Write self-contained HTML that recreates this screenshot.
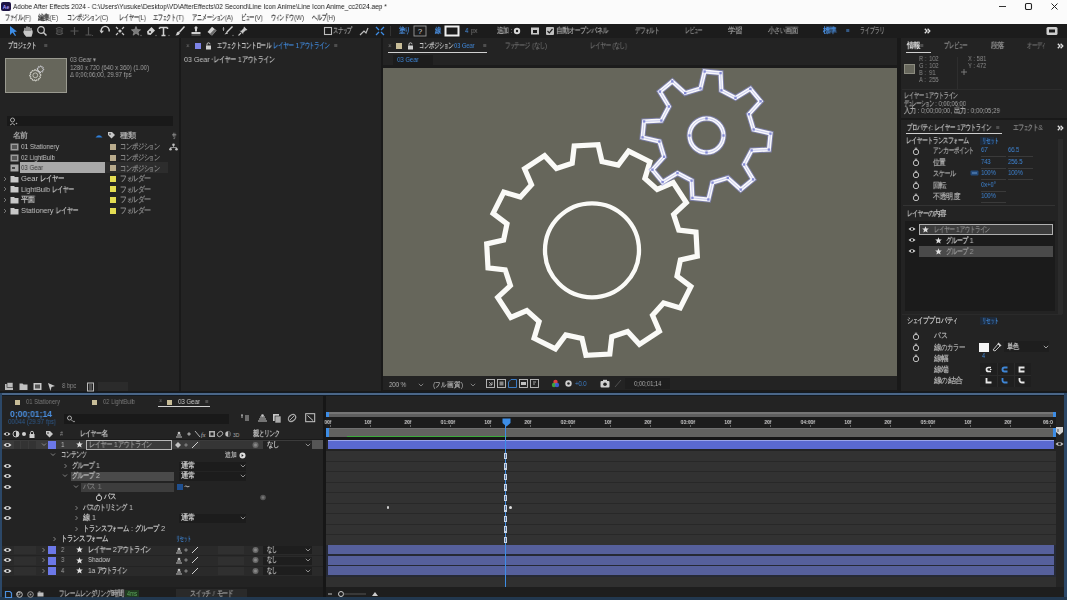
<!DOCTYPE html>
<html><head><meta charset="utf-8">
<style>
*{margin:0;padding:0;box-sizing:border-box}
html,body{width:1067px;height:600px;overflow:hidden;background:#171717;font-family:"Liberation Sans",sans-serif;font-size:7px;color:#b4b4b4}
.a{position:absolute}
.t{position:absolute;white-space:nowrap;line-height:1;transform:scaleX(0.82);transform-origin:0 0;will-change:transform}
svg{overflow:visible}
.c{display:inline-block;vertical-align:top;font-weight:bold}.c>span{display:inline-block;transform-origin:0 0}
</style></head><body>
<div class="a" style="left:0px;top:0px;width:1067px;height:24px;background:#fbfbfb;"></div>
<svg class="a" style="left:1px;top:2px;" width="10" height="9" viewBox="0 0 10 9"><rect x="0" y="0" width="10" height="9" rx="2" fill="#1c1244"/><text x="5" y="6.6" font-size="5" font-family="Liberation Sans" font-weight="bold" fill="#a89cff" text-anchor="middle">Ae</text></svg>
<div class="t" style="left:13px;top:2.97px;font-size:8.05px;color:#1a1a1a;;">Adobe After Effects 2024 - C:\Users\Yusuke\Desktop\VD\AfterEffects\02 Second\Line Icon Anime\Line Icon Anime_cc2024.aep *</div>
<div class="a" style="left:999px;top:6px;width:7px;height:1px;background:#333;"></div>
<svg class="a" style="left:1024px;top:2px;" width="9" height="9" viewBox="0 0 9 9"><rect x="1.5" y="1.5" width="6" height="6" rx="1.2" fill="none" stroke="#222" stroke-width="1.1"/></svg>
<svg class="a" style="left:1050px;top:2px;" width="9" height="9" viewBox="0 0 9 9"><path d="M1.5 1.5L7.5 7.5M7.5 1.5L1.5 7.5" stroke="#222" stroke-width="1"/></svg>
<div class="t" style="left:5px;top:14.22px;font-size:7.56px;color:#3a3a3a;;"><span class="c" style="width:5.90px"><span style="transform:scaleX(0.780)">フ</span></span><span class="c" style="width:4.54px"><span style="transform:scaleX(0.600)">ァ</span></span><span class="c" style="width:5.90px"><span style="transform:scaleX(0.780)">イ</span></span><span class="c" style="width:5.90px"><span style="transform:scaleX(0.780)">ル</span></span>(F)</div>
<div class="t" style="left:38px;top:14.22px;font-size:7.56px;color:#3a3a3a;;"><span class="c" style="width:7.18px"><span style="transform:scaleX(0.950)">編</span></span><span class="c" style="width:7.18px"><span style="transform:scaleX(0.950)">集</span></span>(E)</div>
<div class="t" style="left:67px;top:14.22px;font-size:7.56px;color:#3a3a3a;;"><span class="c" style="width:5.90px"><span style="transform:scaleX(0.780)">コ</span></span><span class="c" style="width:5.90px"><span style="transform:scaleX(0.780)">ン</span></span><span class="c" style="width:5.90px"><span style="transform:scaleX(0.780)">ポ</span></span><span class="c" style="width:5.90px"><span style="transform:scaleX(0.780)">ジ</span></span><span class="c" style="width:5.90px"><span style="transform:scaleX(0.780)">シ</span></span><span class="c" style="width:4.54px"><span style="transform:scaleX(0.600)">ョ</span></span><span class="c" style="width:5.90px"><span style="transform:scaleX(0.780)">ン</span></span>(C)</div>
<div class="t" style="left:119px;top:14.22px;font-size:7.56px;color:#3a3a3a;;"><span class="c" style="width:5.90px"><span style="transform:scaleX(0.780)">レ</span></span><span class="c" style="width:5.90px"><span style="transform:scaleX(0.780)">イ</span></span><span class="c" style="width:5.90px"><span style="transform:scaleX(0.780)">ヤ</span></span><span class="c" style="width:6.05px"><span style="transform:scaleX(0.800)">ー</span></span>(L)</div>
<div class="t" style="left:153px;top:14.22px;font-size:7.56px;color:#3a3a3a;;"><span class="c" style="width:5.90px"><span style="transform:scaleX(0.780)">エ</span></span><span class="c" style="width:5.90px"><span style="transform:scaleX(0.780)">フ</span></span><span class="c" style="width:4.54px"><span style="transform:scaleX(0.600)">ェ</span></span><span class="c" style="width:5.90px"><span style="transform:scaleX(0.780)">ク</span></span><span class="c" style="width:5.90px"><span style="transform:scaleX(0.780)">ト</span></span>(T)</div>
<div class="t" style="left:192px;top:14.22px;font-size:7.56px;color:#3a3a3a;;"><span class="c" style="width:5.90px"><span style="transform:scaleX(0.780)">ア</span></span><span class="c" style="width:5.90px"><span style="transform:scaleX(0.780)">ニ</span></span><span class="c" style="width:5.90px"><span style="transform:scaleX(0.780)">メ</span></span><span class="c" style="width:6.05px"><span style="transform:scaleX(0.800)">ー</span></span><span class="c" style="width:5.90px"><span style="transform:scaleX(0.780)">シ</span></span><span class="c" style="width:4.54px"><span style="transform:scaleX(0.600)">ョ</span></span><span class="c" style="width:5.90px"><span style="transform:scaleX(0.780)">ン</span></span>(A)</div>
<div class="t" style="left:241px;top:14.22px;font-size:7.56px;color:#3a3a3a;;"><span class="c" style="width:5.90px"><span style="transform:scaleX(0.780)">ビ</span></span><span class="c" style="width:4.54px"><span style="transform:scaleX(0.600)">ュ</span></span><span class="c" style="width:6.05px"><span style="transform:scaleX(0.800)">ー</span></span>(V)</div>
<div class="t" style="left:271px;top:14.22px;font-size:7.56px;color:#3a3a3a;;"><span class="c" style="width:5.90px"><span style="transform:scaleX(0.780)">ウ</span></span><span class="c" style="width:4.54px"><span style="transform:scaleX(0.600)">ィ</span></span><span class="c" style="width:5.90px"><span style="transform:scaleX(0.780)">ン</span></span><span class="c" style="width:5.90px"><span style="transform:scaleX(0.780)">ド</span></span><span class="c" style="width:5.90px"><span style="transform:scaleX(0.780)">ウ</span></span>(W)</div>
<div class="t" style="left:312px;top:14.22px;font-size:7.56px;color:#3a3a3a;;"><span class="c" style="width:5.90px"><span style="transform:scaleX(0.780)">ヘ</span></span><span class="c" style="width:5.90px"><span style="transform:scaleX(0.780)">ル</span></span><span class="c" style="width:5.90px"><span style="transform:scaleX(0.780)">プ</span></span>(H)</div>
<div class="a" style="left:0px;top:24px;width:1067px;height:14px;background:#1c1c1c;"></div>
<svg class="a" style="left:8px;top:25px;" width="10" height="12" viewBox="0 0 10 12"><path d="M2 1L2 10L4.5 7.5L7 11L8 10.5L6 7L9 6.5Z" fill="#3d8de6"/></svg>
<svg class="a" style="left:22px;top:25px;" width="12" height="12" viewBox="0 0 12 12"><path d="M3 6V3.5M5 6V2M7 6V2.3M9 6.5V3.5M3 6C2 6 1.5 7 2.5 8.5L4.5 11H9L10 8V6" stroke="#c8c8c8" stroke-width="1.3" fill="#c8c8c8" stroke-linecap="round"/></svg>
<svg class="a" style="left:36px;top:25px;" width="12" height="12" viewBox="0 0 12 12"><circle cx="5" cy="5" r="3.3" fill="none" stroke="#c8c8c8" stroke-width="1.2"/><path d="M7.5 7.5L10.5 10.5" stroke="#c8c8c8" stroke-width="1.5"/></svg>
<svg class="a" style="left:54px;top:25px;" width="11" height="12" viewBox="0 0 11 12"><path d="M2 4Q5 1 9 4M2 8Q5 11 9 8M3 5H8V7H3Z" stroke="#555" fill="none" stroke-width="1.1"/></svg>
<svg class="a" style="left:69px;top:25px;" width="11" height="12" viewBox="0 0 11 12"><path d="M5.5 2V10M1.5 6H9.5" stroke="#555" stroke-width="1.2"/></svg>
<svg class="a" style="left:83px;top:25px;" width="11" height="12" viewBox="0 0 11 12"><path d="M5.5 2V10M2.5 10H8.5" stroke="#555" stroke-width="1.2"/><circle cx="9.5" cy="10.5" r="0.6" fill="#555"/></svg>
<svg class="a" style="left:99px;top:25px;" width="12" height="12" viewBox="0 0 12 12"><path d="M2.5 7A4 4 0 1 1 10 6.5" fill="none" stroke="#c8c8c8" stroke-width="1.4"/><path d="M0.5 5.5L2.5 8.5L5 5.8Z" fill="#c8c8c8"/></svg>
<svg class="a" style="left:114px;top:25px;" width="12" height="12" viewBox="0 0 12 12"><path d="M2 2L4 4M10 2L8 4M2 10L4 8M10 10L8 8" stroke="#c8c8c8" stroke-width="1.2"/><circle cx="6" cy="6" r="1.6" fill="#c8c8c8"/></svg>
<svg class="a" style="left:130px;top:25px;" width="12" height="12" viewBox="0 0 12 12"><path d="M6 1.5L7.3 4.6L10.6 4.8L8 6.9L8.9 10.2L6 8.3L3.1 10.2L4 6.9L1.4 4.8L4.7 4.6Z" fill="#7a7a7a" stroke="#9a9a9a" stroke-width="0.6"/><circle cx="11" cy="10.5" r="0.7" fill="#777"/></svg>
<svg class="a" style="left:145px;top:25px;" width="12" height="12" viewBox="0 0 12 12"><path d="M2.5 9.5L2 6.5L6.5 2L10 5.5L5.5 10Z" fill="#d0d0d0"/><circle cx="5" cy="7" r="1" fill="#1c1c1c"/><circle cx="11" cy="10.5" r="0.7" fill="#777"/></svg>
<svg class="a" style="left:158px;top:25px;" width="12" height="12" viewBox="0 0 12 12"><path d="M1.5 2.5H9.5M5.5 2.5V10.5M3.5 10.5H7.5M1.5 2.5V4M9.5 2.5V4" stroke="#d0d0d0" stroke-width="1.5"/><circle cx="11" cy="10.5" r="0.7" fill="#777"/></svg>
<svg class="a" style="left:174px;top:25px;" width="12" height="12" viewBox="0 0 12 12"><path d="M10.5 1.5L5.5 7" stroke="#d0d0d0" stroke-width="1.5"/><path d="M5 6.5Q2.5 6.5 2.5 9L1.5 10.5Q5 10.5 6 8Z" fill="#d0d0d0"/></svg>
<svg class="a" style="left:190px;top:25px;" width="12" height="12" viewBox="0 0 12 12"><circle cx="6" cy="2.8" r="1.5" fill="#d0d0d0"/><path d="M5 3.5H7V6.5H5Z" fill="#d0d0d0"/><path d="M1.5 7H10.5V9H1.5Z" fill="#d0d0d0"/><path d="M1.5 10H10.5" stroke="#888" stroke-width="0.8"/></svg>
<svg class="a" style="left:206px;top:25px;" width="12" height="12" viewBox="0 0 12 12"><path d="M1.5 7L6 1.8L10.5 5.5L6 10.5Z" fill="#d0d0d0"/><path d="M3.7 9.3L8.3 4.2L10.5 5.5L6 10.5Z" fill="#6a6a6a"/></svg>
<svg class="a" style="left:222px;top:25px;" width="12" height="12" viewBox="0 0 12 12"><path d="M10.5 1.5L5 7" stroke="#d0d0d0" stroke-width="1.4"/><path d="M5 6.5L2.5 9.5L6 8.5Z" fill="#d0d0d0"/><path d="M1.5 2V6M0.5 4H2.5" stroke="#aaa" stroke-width="0.9"/><circle cx="11" cy="10.5" r="0.7" fill="#777"/></svg>
<svg class="a" style="left:237px;top:25px;" width="12" height="12" viewBox="0 0 12 12"><path d="M7 1.5L10.5 5L8.5 5.5L6 8L6.5 9.5L2.5 5.5L4 6L6.5 3.5Z" fill="#c8c8c8"/><path d="M4 8L1.5 10.5" stroke="#c8c8c8" stroke-width="1.1"/></svg>
<svg class="a" style="left:323px;top:26px;" width="10" height="10" viewBox="0 0 10 10"><rect x="1.5" y="1.5" width="7" height="7" fill="none" stroke="#bdbdbd" stroke-width="1.1"/></svg>
<div class="t" style="left:333px;top:27.22px;font-size:7.56px;color:#9a9a9a;;transform:scaleX(0.8557);"><span class="c" style="width:5.90px"><span style="transform:scaleX(0.780)">ス</span></span><span class="c" style="width:5.90px"><span style="transform:scaleX(0.780)">ナ</span></span><span class="c" style="width:4.54px"><span style="transform:scaleX(0.600)">ッ</span></span><span class="c" style="width:5.90px"><span style="transform:scaleX(0.780)">プ</span></span></div>
<svg class="a" style="left:358px;top:25px;" width="12" height="12" viewBox="0 0 12 12"><path d="M2 10L6 6L8 8L10 3" stroke="#bdbdbd" stroke-width="1.2" fill="none"/></svg>
<svg class="a" style="left:374px;top:25px;" width="12" height="12" viewBox="0 0 12 12"><path d="M2 2L5 5M10 2L7 5M2 10L5 7M10 10L7 7" stroke="#3d8de6" stroke-width="1.3"/></svg>
<div class="a" style="left:390px;top:26px;width:1px;height:10px;background:#333;"></div>
<div class="t" style="left:399px;top:27.22px;font-size:7.56px;color:#4a90e2;;"><span class="c" style="width:7.18px"><span style="transform:scaleX(0.950)">塗</span></span><span class="c" style="width:5.90px"><span style="transform:scaleX(0.780)">り</span></span></div>
<svg class="a" style="left:413px;top:25px;" width="14" height="12" viewBox="0 0 14 12"><rect x="1" y="1" width="12" height="10" fill="none" stroke="#9a9a9a" stroke-width="0.9"/><text x="7" y="9" font-size="8" text-anchor="middle" fill="#cfcfcf" font-family="Liberation Sans">?</text></svg>
<div class="t" style="left:435px;top:27.22px;font-size:7.56px;color:#4a90e2;;"><span class="c" style="width:7.18px"><span style="transform:scaleX(0.950)">線</span></span></div>
<svg class="a" style="left:444px;top:25px;" width="16" height="12" viewBox="0 0 16 12"><rect x="1.5" y="1.5" width="13" height="9" fill="none" stroke="#f0f0f0" stroke-width="2"/></svg>
<div class="t" style="left:465px;top:27.22px;font-size:7.56px;color:#4a90e2;;">4</div>
<div class="t" style="left:471px;top:27.34px;font-size:7.32px;color:#7a7a7a;;">px</div>
<div class="t" style="left:497px;top:27.22px;font-size:7.56px;color:#9a9a9a;;"><span class="c" style="width:7.18px"><span style="transform:scaleX(0.950)">追</span></span><span class="c" style="width:7.18px"><span style="transform:scaleX(0.950)">加</span></span> :</div>
<svg class="a" style="left:512px;top:26px;" width="10" height="10" viewBox="0 0 10 10"><circle cx="5" cy="5" r="3.2" fill="#d8d8d8"/><circle cx="5" cy="5" r="1.2" fill="#1c1c1c"/></svg>
<svg class="a" style="left:530px;top:26px;" width="10" height="10" viewBox="0 0 10 10"><rect x="1" y="1.5" width="8" height="7" fill="#c8c8c8"/><rect x="3" y="4" width="4" height="3" fill="#1c1c1c"/></svg>
<svg class="a" style="left:545px;top:26px;" width="10" height="10" viewBox="0 0 10 10"><rect x="1" y="1" width="8" height="8" rx="1" fill="#c0c0c0"/><path d="M2.5 5L4.3 6.8L7.5 3" stroke="#1c1c1c" stroke-width="1.2" fill="none"/></svg>
<div class="t" style="left:556px;top:27.22px;font-size:7.56px;color:#9a9a9a;;transform:scaleX(0.9330);"><span class="c" style="width:7.18px"><span style="transform:scaleX(0.950)">自</span></span><span class="c" style="width:7.18px"><span style="transform:scaleX(0.950)">動</span></span><span class="c" style="width:5.90px"><span style="transform:scaleX(0.780)">オ</span></span><span class="c" style="width:6.05px"><span style="transform:scaleX(0.800)">ー</span></span><span class="c" style="width:5.90px"><span style="transform:scaleX(0.780)">プ</span></span><span class="c" style="width:5.90px"><span style="transform:scaleX(0.780)">ン</span></span><span class="c" style="width:5.90px"><span style="transform:scaleX(0.780)">パ</span></span><span class="c" style="width:5.90px"><span style="transform:scaleX(0.780)">ネ</span></span><span class="c" style="width:5.90px"><span style="transform:scaleX(0.780)">ル</span></span></div>
<div class="t" style="left:634.5px;top:27.22px;font-size:7.56px;color:#8a8a8a;;transform:scaleX(0.8721);"><span class="c" style="width:5.90px"><span style="transform:scaleX(0.780)">デ</span></span><span class="c" style="width:5.90px"><span style="transform:scaleX(0.780)">フ</span></span><span class="c" style="width:4.54px"><span style="transform:scaleX(0.600)">ォ</span></span><span class="c" style="width:5.90px"><span style="transform:scaleX(0.780)">ル</span></span><span class="c" style="width:5.90px"><span style="transform:scaleX(0.780)">ト</span></span></div>
<div class="t" style="left:685px;top:27.22px;font-size:7.56px;color:#8a8a8a;;transform:scaleX(0.7827);"><span class="c" style="width:5.90px"><span style="transform:scaleX(0.780)">レ</span></span><span class="c" style="width:5.90px"><span style="transform:scaleX(0.780)">ビ</span></span><span class="c" style="width:4.54px"><span style="transform:scaleX(0.600)">ュ</span></span><span class="c" style="width:6.05px"><span style="transform:scaleX(0.800)">ー</span></span></div>
<div class="t" style="left:728px;top:27.22px;font-size:7.56px;color:#8a8a8a;;transform:scaleX(0.9760);"><span class="c" style="width:7.18px"><span style="transform:scaleX(0.950)">学</span></span><span class="c" style="width:7.18px"><span style="transform:scaleX(0.950)">習</span></span></div>
<div class="t" style="left:768px;top:27.22px;font-size:7.56px;color:#8a8a8a;;transform:scaleX(0.9010);"><span class="c" style="width:7.18px"><span style="transform:scaleX(0.950)">小</span></span><span class="c" style="width:5.90px"><span style="transform:scaleX(0.780)">さ</span></span><span class="c" style="width:5.90px"><span style="transform:scaleX(0.780)">い</span></span><span class="c" style="width:7.18px"><span style="transform:scaleX(0.950)">画</span></span><span class="c" style="width:7.18px"><span style="transform:scaleX(0.950)">面</span></span></div>
<div class="t" style="left:822.5px;top:27.22px;font-size:7.56px;color:#4a90e2;;transform:scaleX(0.9412);"><span class="c" style="width:7.18px"><span style="transform:scaleX(0.950)">標</span></span><span class="c" style="width:7.18px"><span style="transform:scaleX(0.950)">準</span></span></div>
<div class="t" style="left:846px;top:27.04px;font-size:7.93px;color:#4a90e2;;">≡</div>
<div class="t" style="left:860px;top:27.22px;font-size:7.56px;color:#8a8a8a;;transform:scaleX(0.8149);"><span class="c" style="width:5.90px"><span style="transform:scaleX(0.780)">ラ</span></span><span class="c" style="width:5.90px"><span style="transform:scaleX(0.780)">イ</span></span><span class="c" style="width:5.90px"><span style="transform:scaleX(0.780)">ブ</span></span><span class="c" style="width:5.90px"><span style="transform:scaleX(0.780)">ラ</span></span><span class="c" style="width:5.90px"><span style="transform:scaleX(0.780)">リ</span></span></div>
<svg class="a" style="left:924px;top:28px;" width="7" height="6" viewBox="0 0 7 6"><path d="M0.8 0.8L3 3L0.8 5.2M3.6 0.8L5.8 3L3.6 5.2" stroke="#e0e0e0" stroke-width="1.3" fill="none"/></svg>
<svg class="a" style="left:1046px;top:26px;" width="12" height="10" viewBox="0 0 12 10"><rect x="0.5" y="1" width="11" height="8" rx="1.5" fill="#cfcfcf"/><rect x="3" y="3.5" width="6" height="3" fill="#1c1c1c"/></svg>
<div class="a" style="left:0px;top:38px;width:1067px;height:355px;background:#191919;"></div>
<div class="a" style="left:0px;top:38px;width:178.5px;height:353px;background:#232323;"></div>
<div class="a" style="left:181px;top:38px;width:200px;height:353px;background:#232323;"></div>
<div class="a" style="left:383px;top:38px;width:514px;height:353px;background:#232323;"></div>
<div class="a" style="left:901px;top:38px;width:166px;height:80px;background:#232323;"></div>
<div class="a" style="left:901px;top:120px;width:166px;height:271px;background:#232323;"></div>
<div class="t" style="left:8px;top:42.16px;font-size:7.69px;color:#c8c8c8;;transform:scaleX(0.8109);"><span class="c" style="width:5.99px"><span style="transform:scaleX(0.780)">プ</span></span><span class="c" style="width:5.99px"><span style="transform:scaleX(0.780)">ロ</span></span><span class="c" style="width:5.99px"><span style="transform:scaleX(0.780)">ジ</span></span><span class="c" style="width:4.61px"><span style="transform:scaleX(0.600)">ェ</span></span><span class="c" style="width:5.99px"><span style="transform:scaleX(0.780)">ク</span></span><span class="c" style="width:5.99px"><span style="transform:scaleX(0.780)">ト</span></span></div>
<div class="t" style="left:44px;top:42.03px;font-size:7.93px;color:#777;;">≡</div>
<div class="a" style="left:4.5px;top:58px;width:62px;height:35.2px;background:#9a9a90;"></div>
<div class="a" style="left:5.5px;top:59px;width:60px;height:33.2px;background:rgb(102,102,91);"></div>
<svg class="a" style="left:0px;top:0px;" width="70" height="100" viewBox="0 0 70 100"><polygon points="34.25,70.72 34.36,69.78 35.62,69.71 35.83,70.63 36.69,70.81 37.24,70.05 38.37,70.62 38.09,71.52 38.75,72.10 39.61,71.72 40.30,72.78 39.61,73.42 39.88,74.25 40.82,74.36 40.89,75.62 39.97,75.83 39.79,76.69 40.55,77.24 39.98,78.37 39.08,78.09 38.50,78.75 38.88,79.61 37.82,80.30 37.18,79.61 36.35,79.88 36.24,80.82 34.98,80.89 34.77,79.97 33.91,79.79 33.36,80.55 32.23,79.98 32.51,79.08 31.85,78.50 30.99,78.88 30.30,77.82 30.99,77.18 30.72,76.35 29.78,76.24 29.71,74.98 30.63,74.77 30.81,73.91 30.05,73.36 30.62,72.23 31.52,72.51 32.10,71.85 31.72,70.99 32.78,70.30 33.42,70.99" fill="none" stroke="#e0e0d8" stroke-width="0.9"/><circle cx="35.3" cy="75.3" r="2.4" fill="none" stroke="#e0e0d8" stroke-width="0.7"/><polygon points="40.08,66.82 40.30,65.90 41.15,65.98 41.18,66.93 41.93,67.32 42.73,66.83 43.27,67.48 42.63,68.18 42.88,68.98 43.80,69.20 43.72,70.05 42.77,70.08 42.38,70.83 42.87,71.63 42.22,72.17 41.52,71.53 40.72,71.78 40.50,72.70 39.65,72.62 39.62,71.67 38.87,71.28 38.07,71.77 37.53,71.12 38.17,70.42 37.92,69.62 37.00,69.40 37.08,68.55 38.03,68.52 38.42,67.77 37.93,66.97 38.58,66.43 39.28,67.07" fill="none" stroke="#d8d8e0" stroke-width="0.8"/></svg>
<div class="t" style="left:70px;top:56.34px;font-size:7.32px;color:#a0a0a0;;">03 Gear ▾</div>
<div class="t" style="left:70px;top:63.84px;font-size:7.32px;color:#a0a0a0;;">1280 x 720  (640 x 360) (1.00)</div>
<div class="t" style="left:70px;top:71.34px;font-size:7.32px;color:#a0a0a0;;">Δ 0;00;06;00, 29.97 fps</div>
<div class="a" style="left:7px;top:116px;width:166px;height:10px;background:#191919;"></div>
<svg class="a" style="left:9px;top:117px;" width="10" height="8" viewBox="0 0 10 8"><circle cx="3.5" cy="3" r="2" fill="none" stroke="#aaa" stroke-width="1"/><path d="M1 8Q3.5 5 6 8" stroke="#aaa" stroke-width="1" fill="none"/><circle cx="7.5" cy="6.5" r="0.8" fill="#aaa"/></svg>
<div class="t" style="left:13px;top:132.16px;font-size:7.69px;color:#a5a5a5;;transform:scaleX(1.0278);"><span class="c" style="width:7.30px"><span style="transform:scaleX(0.950)">名</span></span><span class="c" style="width:7.30px"><span style="transform:scaleX(0.950)">前</span></span></div>
<svg class="a" style="left:95px;top:133px;" width="8" height="5" viewBox="0 0 8 5"><path d="M0.5 4.5Q4 0 7.5 4.5Z" fill="#2f7fd8"/></svg>
<svg class="a" style="left:107px;top:131px;" width="9" height="9" viewBox="0 0 9 9"><path d="M1 1H5L8 4L4.5 7.5L1 4Z" fill="#c8c8c8"/><circle cx="3" cy="3" r="0.8" fill="#232323"/></svg>
<div class="t" style="left:120px;top:132.16px;font-size:7.69px;color:#a5a5a5;;transform:scaleX(1.0964);"><span class="c" style="width:7.30px"><span style="transform:scaleX(0.950)">種</span></span><span class="c" style="width:7.30px"><span style="transform:scaleX(0.950)">類</span></span></div>
<div class="t" style="left:172px;top:132.34px;font-size:7.32px;color:#a5a5a5;;"><span class="c" style="width:5.71px"><span style="transform:scaleX(0.780)">サ</span></span></div>
<svg class="a" style="left:169px;top:143px;" width="9" height="8" viewBox="0 0 9 8"><circle cx="4.5" cy="1.8" r="1.3" fill="#c0c0c0"/><circle cx="1.5" cy="6.3" r="1.3" fill="#c0c0c0"/><circle cx="7.5" cy="6.3" r="1.3" fill="#c0c0c0"/><path d="M4.5 2V4.5H1.5V6M4.5 4.5H7.5V6" stroke="#c0c0c0" stroke-width="0.7" fill="none"/></svg>
<svg class="a" style="left:10px;top:143.2px;" width="9" height="8" viewBox="0 0 9 8"><rect x="0.5" y="0.5" width="8" height="7" fill="#9c9c9c"/><rect x="2" y="2" width="5" height="4" fill="#555"/></svg>
<svg class="a" style="left:110px;top:144.2px;" width="6" height="6" viewBox="0 0 6 6"><rect width="6" height="6" fill="#b9ab8c"/></svg>
<div class="t" style="left:20.5px;top:143.36px;font-size:7.69px;color:#c0c0c0;;transform:scaleX(0.8386);">01 Stationery</div>
<div class="t" style="left:120.3px;top:143.42px;font-size:7.56px;color:#858585;;transform:scaleX(1.0031);"><span class="c" style="width:5.90px"><span style="transform:scaleX(0.780)">コ</span></span><span class="c" style="width:5.90px"><span style="transform:scaleX(0.780)">ン</span></span><span class="c" style="width:5.90px"><span style="transform:scaleX(0.780)">ポ</span></span><span class="c" style="width:5.90px"><span style="transform:scaleX(0.780)">ジ</span></span><span class="c" style="width:5.90px"><span style="transform:scaleX(0.780)">シ</span></span><span class="c" style="width:4.54px"><span style="transform:scaleX(0.600)">ョ</span></span><span class="c" style="width:5.90px"><span style="transform:scaleX(0.780)">ン</span></span></div>
<svg class="a" style="left:10px;top:153.75px;" width="9" height="8" viewBox="0 0 9 8"><rect x="0.5" y="0.5" width="8" height="7" fill="#9c9c9c"/><rect x="2" y="2" width="5" height="4" fill="#555"/></svg>
<svg class="a" style="left:110px;top:154.75px;" width="6" height="6" viewBox="0 0 6 6"><rect width="6" height="6" fill="#b9ab8c"/></svg>
<div class="t" style="left:20.5px;top:153.91px;font-size:7.69px;color:#c0c0c0;;transform:scaleX(0.7953);">02 LightBulb</div>
<div class="t" style="left:120.3px;top:153.97px;font-size:7.56px;color:#858585;;transform:scaleX(1.0031);"><span class="c" style="width:5.90px"><span style="transform:scaleX(0.780)">コ</span></span><span class="c" style="width:5.90px"><span style="transform:scaleX(0.780)">ン</span></span><span class="c" style="width:5.90px"><span style="transform:scaleX(0.780)">ポ</span></span><span class="c" style="width:5.90px"><span style="transform:scaleX(0.780)">ジ</span></span><span class="c" style="width:5.90px"><span style="transform:scaleX(0.780)">シ</span></span><span class="c" style="width:4.54px"><span style="transform:scaleX(0.600)">ョ</span></span><span class="c" style="width:5.90px"><span style="transform:scaleX(0.780)">ン</span></span></div>
<div class="a" style="left:105px;top:162px;width:63px;height:11px;background:#2d2d2d;"></div>
<div class="a" style="left:20px;top:162px;width:85px;height:11px;background:#a9a9a9;"></div>
<svg class="a" style="left:10px;top:164.29999999999998px;" width="9" height="8" viewBox="0 0 9 8"><rect x="0.5" y="0.5" width="8" height="7" fill="#a8a8a8"/><rect x="2" y="3" width="3" height="2" fill="#444"/></svg>
<svg class="a" style="left:110px;top:165.29999999999998px;" width="6" height="6" viewBox="0 0 6 6"><rect width="6" height="6" fill="#b9ab8c"/></svg>
<div class="t" style="left:20.5px;top:164.46px;font-size:7.69px;color:#3a3a3a;;transform:scaleX(0.7919);">03 Gear</div>
<div class="t" style="left:120.3px;top:164.52px;font-size:7.56px;color:#858585;;transform:scaleX(1.0031);"><span class="c" style="width:5.90px"><span style="transform:scaleX(0.780)">コ</span></span><span class="c" style="width:5.90px"><span style="transform:scaleX(0.780)">ン</span></span><span class="c" style="width:5.90px"><span style="transform:scaleX(0.780)">ポ</span></span><span class="c" style="width:5.90px"><span style="transform:scaleX(0.780)">ジ</span></span><span class="c" style="width:5.90px"><span style="transform:scaleX(0.780)">シ</span></span><span class="c" style="width:4.54px"><span style="transform:scaleX(0.600)">ョ</span></span><span class="c" style="width:5.90px"><span style="transform:scaleX(0.780)">ン</span></span></div>
<svg class="a" style="left:3px;top:175.85px;" width="4" height="6" viewBox="0 0 4 6"><path d="M1 1L3 3L1 5" stroke="#888" stroke-width="0.8" fill="none"/></svg>
<svg class="a" style="left:10px;top:174.85px;" width="9" height="8" viewBox="0 0 9 8"><path d="M0.5 1H4L5 2H8.5V7.5H0.5Z" fill="#c8c8c8"/></svg>
<svg class="a" style="left:110px;top:175.85px;" width="6" height="6" viewBox="0 0 6 6"><rect width="6" height="6" fill="#e3dc52"/></svg>
<div class="t" style="left:20.5px;top:175.01px;font-size:7.69px;color:#c0c0c0;;transform:scaleX(0.9924);">Gear <span class="c" style="width:5.99px"><span style="transform:scaleX(0.780)">レ</span></span><span class="c" style="width:5.99px"><span style="transform:scaleX(0.780)">イ</span></span><span class="c" style="width:5.99px"><span style="transform:scaleX(0.780)">ヤ</span></span><span class="c" style="width:6.15px"><span style="transform:scaleX(0.800)">ー</span></span></div>
<div class="t" style="left:120.3px;top:175.07px;font-size:7.56px;color:#858585;;transform:scaleX(1.0973);"><span class="c" style="width:5.90px"><span style="transform:scaleX(0.780)">フ</span></span><span class="c" style="width:4.54px"><span style="transform:scaleX(0.600)">ォ</span></span><span class="c" style="width:5.90px"><span style="transform:scaleX(0.780)">ル</span></span><span class="c" style="width:5.90px"><span style="transform:scaleX(0.780)">ダ</span></span><span class="c" style="width:6.05px"><span style="transform:scaleX(0.800)">ー</span></span></div>
<svg class="a" style="left:3px;top:186.39999999999998px;" width="4" height="6" viewBox="0 0 4 6"><path d="M1 1L3 3L1 5" stroke="#888" stroke-width="0.8" fill="none"/></svg>
<svg class="a" style="left:10px;top:185.39999999999998px;" width="9" height="8" viewBox="0 0 9 8"><path d="M0.5 1H4L5 2H8.5V7.5H0.5Z" fill="#c8c8c8"/></svg>
<svg class="a" style="left:110px;top:186.39999999999998px;" width="6" height="6" viewBox="0 0 6 6"><rect width="6" height="6" fill="#e3dc52"/></svg>
<div class="t" style="left:20.5px;top:185.56px;font-size:7.69px;color:#c0c0c0;;transform:scaleX(0.9091);">LightBulb <span class="c" style="width:5.99px"><span style="transform:scaleX(0.780)">レ</span></span><span class="c" style="width:5.99px"><span style="transform:scaleX(0.780)">イ</span></span><span class="c" style="width:5.99px"><span style="transform:scaleX(0.780)">ヤ</span></span><span class="c" style="width:6.15px"><span style="transform:scaleX(0.800)">ー</span></span></div>
<div class="t" style="left:120.3px;top:185.62px;font-size:7.56px;color:#858585;;transform:scaleX(1.0973);"><span class="c" style="width:5.90px"><span style="transform:scaleX(0.780)">フ</span></span><span class="c" style="width:4.54px"><span style="transform:scaleX(0.600)">ォ</span></span><span class="c" style="width:5.90px"><span style="transform:scaleX(0.780)">ル</span></span><span class="c" style="width:5.90px"><span style="transform:scaleX(0.780)">ダ</span></span><span class="c" style="width:6.05px"><span style="transform:scaleX(0.800)">ー</span></span></div>
<svg class="a" style="left:3px;top:196.95px;" width="4" height="6" viewBox="0 0 4 6"><path d="M1 1L3 3L1 5" stroke="#888" stroke-width="0.8" fill="none"/></svg>
<svg class="a" style="left:10px;top:195.95px;" width="9" height="8" viewBox="0 0 9 8"><path d="M0.5 1H4L5 2H8.5V7.5H0.5Z" fill="#c8c8c8"/></svg>
<svg class="a" style="left:110px;top:196.95px;" width="6" height="6" viewBox="0 0 6 6"><rect width="6" height="6" fill="#e3dc52"/></svg>
<div class="t" style="left:20.5px;top:196.11px;font-size:7.69px;color:#c0c0c0;;transform:scaleX(0.9593);"><span class="c" style="width:7.30px"><span style="transform:scaleX(0.950)">平</span></span><span class="c" style="width:7.30px"><span style="transform:scaleX(0.950)">面</span></span></div>
<div class="t" style="left:120.3px;top:196.17px;font-size:7.56px;color:#858585;;transform:scaleX(1.0973);"><span class="c" style="width:5.90px"><span style="transform:scaleX(0.780)">フ</span></span><span class="c" style="width:4.54px"><span style="transform:scaleX(0.600)">ォ</span></span><span class="c" style="width:5.90px"><span style="transform:scaleX(0.780)">ル</span></span><span class="c" style="width:5.90px"><span style="transform:scaleX(0.780)">ダ</span></span><span class="c" style="width:6.05px"><span style="transform:scaleX(0.800)">ー</span></span></div>
<svg class="a" style="left:3px;top:207.5px;" width="4" height="6" viewBox="0 0 4 6"><path d="M1 1L3 3L1 5" stroke="#888" stroke-width="0.8" fill="none"/></svg>
<svg class="a" style="left:10px;top:206.5px;" width="9" height="8" viewBox="0 0 9 8"><path d="M0.5 1H4L5 2H8.5V7.5H0.5Z" fill="#c8c8c8"/></svg>
<svg class="a" style="left:110px;top:207.5px;" width="6" height="6" viewBox="0 0 6 6"><rect width="6" height="6" fill="#e3dc52"/></svg>
<div class="t" style="left:20.5px;top:206.66px;font-size:7.69px;color:#c0c0c0;;transform:scaleX(0.9368);">Stationery <span class="c" style="width:5.99px"><span style="transform:scaleX(0.780)">レ</span></span><span class="c" style="width:5.99px"><span style="transform:scaleX(0.780)">イ</span></span><span class="c" style="width:5.99px"><span style="transform:scaleX(0.780)">ヤ</span></span><span class="c" style="width:6.15px"><span style="transform:scaleX(0.800)">ー</span></span></div>
<div class="t" style="left:120.3px;top:206.72px;font-size:7.56px;color:#858585;;transform:scaleX(1.0973);"><span class="c" style="width:5.90px"><span style="transform:scaleX(0.780)">フ</span></span><span class="c" style="width:4.54px"><span style="transform:scaleX(0.600)">ォ</span></span><span class="c" style="width:5.90px"><span style="transform:scaleX(0.780)">ル</span></span><span class="c" style="width:5.90px"><span style="transform:scaleX(0.780)">ダ</span></span><span class="c" style="width:6.05px"><span style="transform:scaleX(0.800)">ー</span></span></div>
<svg class="a" style="left:4px;top:382px;" width="10" height="10" viewBox="0 0 10 10"><rect x="1" y="2" width="8" height="6" fill="#bbb"/><rect x="3" y="0.5" width="6" height="5" fill="#bbb" stroke="#232323" stroke-width="0.6"/></svg>
<svg class="a" style="left:19px;top:382px;" width="10" height="10" viewBox="0 0 10 10"><path d="M0.5 1.5H3.5L4.5 2.5H8.5V8H0.5Z" fill="#c0c0c0"/></svg>
<svg class="a" style="left:33px;top:382px;" width="10" height="10" viewBox="0 0 10 10"><rect x="0.5" y="1" width="8" height="7" fill="#c8c8c8"/><rect x="2" y="2.5" width="5" height="4" fill="#555"/></svg>
<svg class="a" style="left:47px;top:382px;" width="10" height="10" viewBox="0 0 10 10"><path d="M1 1L8 4L4.5 5L3.5 9Z" fill="#c8c8c8"/></svg>
<div class="t" style="left:62px;top:383.46px;font-size:7.08px;color:#8a8a8a;;">8 bpc</div>
<svg class="a" style="left:86px;top:382px;" width="9" height="10" viewBox="0 0 9 10"><rect x="1.5" y="1" width="6" height="8" fill="none" stroke="#bbb" stroke-width="1"/><path d="M3 3H6M3 5H6M3 7H6" stroke="#bbb" stroke-width="0.6"/></svg>
<div class="a" style="left:98px;top:382px;width:30px;height:9px;background:#2b2b2b;"></div>
<div class="a" style="left:178px;top:382px;width:1px;height:9px;background:#232323;"></div>
<div class="t" style="left:186px;top:42.34px;font-size:7.32px;color:#777;;">×</div>
<div class="a" style="left:195px;top:43px;width:6px;height:6px;background:#7d83e6;"></div>
<svg class="a" style="left:205px;top:42px;" width="7" height="8" viewBox="0 0 7 8"><rect x="1" y="3.5" width="5" height="4" fill="#cfcfcf"/><path d="M2 3.5V2.3A1.5 1.5 0 0 1 5 2.3" stroke="#cfcfcf" stroke-width="0.9" fill="none"/></svg>
<div class="t" style="left:216.5px;top:42.16px;font-size:7.69px;color:#c8c8c8;;transform:scaleX(0.8358);"><span class="c" style="width:5.99px"><span style="transform:scaleX(0.780)">エ</span></span><span class="c" style="width:5.99px"><span style="transform:scaleX(0.780)">フ</span></span><span class="c" style="width:4.61px"><span style="transform:scaleX(0.600)">ェ</span></span><span class="c" style="width:5.99px"><span style="transform:scaleX(0.780)">ク</span></span><span class="c" style="width:5.99px"><span style="transform:scaleX(0.780)">ト</span></span><span class="c" style="width:5.99px"><span style="transform:scaleX(0.780)">コ</span></span><span class="c" style="width:5.99px"><span style="transform:scaleX(0.780)">ン</span></span><span class="c" style="width:5.99px"><span style="transform:scaleX(0.780)">ト</span></span><span class="c" style="width:5.99px"><span style="transform:scaleX(0.780)">ロ</span></span><span class="c" style="width:6.15px"><span style="transform:scaleX(0.800)">ー</span></span><span class="c" style="width:5.99px"><span style="transform:scaleX(0.780)">ル</span></span></div>
<div class="t" style="left:273px;top:42.16px;font-size:7.69px;color:#3f86d6;;transform:scaleX(0.8582);"><span class="c" style="width:5.99px"><span style="transform:scaleX(0.780)">レ</span></span><span class="c" style="width:5.99px"><span style="transform:scaleX(0.780)">イ</span></span><span class="c" style="width:5.99px"><span style="transform:scaleX(0.780)">ヤ</span></span><span class="c" style="width:6.15px"><span style="transform:scaleX(0.800)">ー</span></span> 1<span class="c" style="width:5.99px"><span style="transform:scaleX(0.780)">ア</span></span><span class="c" style="width:5.99px"><span style="transform:scaleX(0.780)">ウ</span></span><span class="c" style="width:5.99px"><span style="transform:scaleX(0.780)">ト</span></span><span class="c" style="width:5.99px"><span style="transform:scaleX(0.780)">ラ</span></span><span class="c" style="width:5.99px"><span style="transform:scaleX(0.780)">イ</span></span><span class="c" style="width:5.99px"><span style="transform:scaleX(0.780)">ン</span></span></div>
<div class="t" style="left:334px;top:42.03px;font-size:7.93px;color:#777;;">≡</div>
<div class="t" style="left:184px;top:56.16px;font-size:7.69px;color:#c0c0c0;;transform:scaleX(0.9246);">03 Gear<span class="c" style="width:4.23px"><span style="transform:scaleX(0.550)">・</span></span><span class="c" style="width:5.99px"><span style="transform:scaleX(0.780)">レ</span></span><span class="c" style="width:5.99px"><span style="transform:scaleX(0.780)">イ</span></span><span class="c" style="width:5.99px"><span style="transform:scaleX(0.780)">ヤ</span></span><span class="c" style="width:6.15px"><span style="transform:scaleX(0.800)">ー</span></span> 1<span class="c" style="width:5.99px"><span style="transform:scaleX(0.780)">ア</span></span><span class="c" style="width:5.99px"><span style="transform:scaleX(0.780)">ウ</span></span><span class="c" style="width:5.99px"><span style="transform:scaleX(0.780)">ト</span></span><span class="c" style="width:5.99px"><span style="transform:scaleX(0.780)">ラ</span></span><span class="c" style="width:5.99px"><span style="transform:scaleX(0.780)">イ</span></span><span class="c" style="width:5.99px"><span style="transform:scaleX(0.780)">ン</span></span></div>
<div class="t" style="left:388px;top:42.34px;font-size:7.32px;color:#777;;">×</div>
<div class="a" style="left:396px;top:43px;width:6px;height:6px;background:#c8bd98;"></div>
<svg class="a" style="left:407px;top:42px;" width="7" height="8" viewBox="0 0 7 8"><rect x="1" y="3.5" width="5" height="4" fill="#cfcfcf"/><path d="M2 3.5V2.3A1.5 1.5 0 0 1 5 2.3" stroke="#cfcfcf" stroke-width="0.9" fill="none"/></svg>
<div class="t" style="left:418.8px;top:42.16px;font-size:7.69px;color:#c8c8c8;;transform:scaleX(0.8392);"><span class="c" style="width:5.99px"><span style="transform:scaleX(0.780)">コ</span></span><span class="c" style="width:5.99px"><span style="transform:scaleX(0.780)">ン</span></span><span class="c" style="width:5.99px"><span style="transform:scaleX(0.780)">ポ</span></span><span class="c" style="width:5.99px"><span style="transform:scaleX(0.780)">ジ</span></span><span class="c" style="width:5.99px"><span style="transform:scaleX(0.780)">シ</span></span><span class="c" style="width:4.61px"><span style="transform:scaleX(0.600)">ョ</span></span><span class="c" style="width:5.99px"><span style="transform:scaleX(0.780)">ン</span></span></div>
<div class="t" style="left:454px;top:42.16px;font-size:7.69px;color:#3f86d6;;transform:scaleX(0.7379);">03 Gear</div>
<div class="t" style="left:483px;top:42.03px;font-size:7.93px;color:#777;;">≡</div>
<div class="a" style="left:388px;top:52px;width:99px;height:1.4px;background:#d0d0d0;"></div>
<div class="t" style="left:505px;top:42.22px;font-size:7.56px;color:#6a6a6a;;transform:scaleX(0.8904);"><span class="c" style="width:5.90px"><span style="transform:scaleX(0.780)">フ</span></span><span class="c" style="width:4.54px"><span style="transform:scaleX(0.600)">ッ</span></span><span class="c" style="width:5.90px"><span style="transform:scaleX(0.780)">テ</span></span><span class="c" style="width:6.05px"><span style="transform:scaleX(0.800)">ー</span></span><span class="c" style="width:5.90px"><span style="transform:scaleX(0.780)">ジ</span></span> (<span class="c" style="width:5.90px"><span style="transform:scaleX(0.780)">な</span></span><span class="c" style="width:5.90px"><span style="transform:scaleX(0.780)">し</span></span>)</div>
<div class="t" style="left:589.5px;top:42.22px;font-size:7.56px;color:#6a6a6a;;transform:scaleX(0.8677);"><span class="c" style="width:5.90px"><span style="transform:scaleX(0.780)">レ</span></span><span class="c" style="width:5.90px"><span style="transform:scaleX(0.780)">イ</span></span><span class="c" style="width:5.90px"><span style="transform:scaleX(0.780)">ヤ</span></span><span class="c" style="width:6.05px"><span style="transform:scaleX(0.800)">ー</span></span> (<span class="c" style="width:5.90px"><span style="transform:scaleX(0.780)">な</span></span><span class="c" style="width:5.90px"><span style="transform:scaleX(0.780)">し</span></span>)</div>
<div class="a" style="left:383px;top:64.5px;width:514px;height:4px;background:#1b1b1b;"></div>
<div class="a" style="left:393px;top:55px;width:40px;height:10px;background:#1c1c1c;"></div>
<div class="t" style="left:397px;top:56.34px;font-size:7.32px;color:#3f86d6;;">03 Gear</div>
<div class="a" style="left:383px;top:68px;width:514px;height:308px;background:rgb(102,102,91);"></div>
<div class="t" style="left:389px;top:381.34px;font-size:7.32px;color:#b8b8b8;;">200 %</div>
<svg class="a" style="left:418px;top:382.5px;" width="6" height="4" viewBox="0 0 6 4"><path d="M0.8 0.8L3 3L5.2 0.8" stroke="#888" stroke-width="0.9" fill="none"/></svg>
<div class="t" style="left:433px;top:381.34px;font-size:7.32px;color:#a8a8a8;;transform:scaleX(0.9948);">(<span class="c" style="width:5.71px"><span style="transform:scaleX(0.780)">フ</span></span><span class="c" style="width:5.71px"><span style="transform:scaleX(0.780)">ル</span></span><span class="c" style="width:6.95px"><span style="transform:scaleX(0.950)">画</span></span><span class="c" style="width:6.95px"><span style="transform:scaleX(0.950)">質</span></span>)</div>
<svg class="a" style="left:470px;top:382.5px;" width="6" height="4" viewBox="0 0 6 4"><path d="M0.8 0.8L3 3L5.2 0.8" stroke="#888" stroke-width="0.9" fill="none"/></svg>
<svg class="a" style="left:486px;top:379px;" width="9" height="10" viewBox="0 0 9 10"><rect x="0.5" y="0.5" width="8" height="8" fill="none" stroke="#c0c0c0" stroke-width="0.9"/><path d="M3 3L6 6M6 3V6H3" stroke="#c0c0c0" stroke-width="0.8" fill="none"/></svg>
<svg class="a" style="left:497px;top:379px;" width="9" height="10" viewBox="0 0 9 10"><rect x="0.5" y="0.5" width="8" height="8" fill="none" stroke="#c0c0c0" stroke-width="0.9"/><rect x="2.5" y="2.5" width="4" height="4" fill="#888"/></svg>
<svg class="a" style="left:508px;top:379px;" width="9" height="10" viewBox="0 0 9 10"><path d="M0.5 8.5V3L3 0.5H8.5V8.5Z" fill="none" stroke="#3f86d6" stroke-width="0.9"/></svg>
<svg class="a" style="left:519px;top:379px;" width="9" height="10" viewBox="0 0 9 10"><rect x="0.5" y="0.5" width="8" height="8" fill="none" stroke="#c0c0c0" stroke-width="0.9"/><rect x="2" y="3" width="5" height="3" fill="#c0c0c0"/></svg>
<svg class="a" style="left:530px;top:379px;" width="9" height="10" viewBox="0 0 9 10"><rect x="0.5" y="0.5" width="8" height="8" fill="none" stroke="#c0c0c0" stroke-width="0.9"/><path d="M3 3H6M3 5H5" stroke="#c0c0c0" stroke-width="0.8"/></svg>
<svg class="a" style="left:551px;top:379px;" width="9" height="9" viewBox="0 0 9 9"><circle cx="4.5" cy="3" r="2.2" fill="#e04040"/><circle cx="3" cy="6" r="2.2" fill="#40b040" opacity="0.9"/><circle cx="6" cy="6" r="2.2" fill="#4060e0" opacity="0.9"/></svg>
<svg class="a" style="left:564px;top:379px;" width="9" height="9" viewBox="0 0 9 9"><circle cx="4.5" cy="4.5" r="3.2" fill="#d0d0d0"/><circle cx="4.5" cy="4.5" r="1.3" fill="#232323"/></svg>
<div class="t" style="left:575px;top:381.46px;font-size:7.08px;color:#3f86d6;;">+0.0</div>
<svg class="a" style="left:600px;top:379px;" width="10" height="9" viewBox="0 0 10 9"><rect x="0.5" y="2" width="9" height="6.5" rx="1" fill="#d0d0d0"/><circle cx="5" cy="5.2" r="1.8" fill="#232323"/><rect x="3" y="0.8" width="4" height="1.5" fill="#d0d0d0"/></svg>
<svg class="a" style="left:614px;top:379px;" width="8" height="9" viewBox="0 0 8 9"><path d="M1 8L7 1" stroke="#555" stroke-width="0.9"/></svg>
<div class="a" style="left:625px;top:378px;width:45px;height:11px;background:#1e1e1e;"></div>
<div class="t" style="left:634px;top:381.46px;font-size:7.08px;color:#a8a8a8;;">0;00;01;14</div>
<div class="a" style="left:382px;top:390px;width:516px;height:2px;background:#1a1a1a;"></div>
<div class="t" style="left:906.7px;top:42.16px;font-size:7.69px;color:#e0e0e0;;transform:scaleX(0.9113);"><span class="c" style="width:7.30px"><span style="transform:scaleX(0.950)">情</span></span><span class="c" style="width:7.30px"><span style="transform:scaleX(0.950)">報</span></span></div>
<div class="t" style="left:920px;top:42.03px;font-size:7.93px;color:#777;;">≡</div>
<div class="a" style="left:906px;top:52px;width:25px;height:1.4px;background:#d0d0d0;"></div>
<div class="t" style="left:944px;top:42.22px;font-size:7.56px;color:#8a8a8a;;transform:scaleX(0.8319);"><span class="c" style="width:5.90px"><span style="transform:scaleX(0.780)">プ</span></span><span class="c" style="width:5.90px"><span style="transform:scaleX(0.780)">レ</span></span><span class="c" style="width:5.90px"><span style="transform:scaleX(0.780)">ビ</span></span><span class="c" style="width:4.54px"><span style="transform:scaleX(0.600)">ュ</span></span><span class="c" style="width:6.05px"><span style="transform:scaleX(0.800)">ー</span></span></div>
<div class="t" style="left:991px;top:42.22px;font-size:7.56px;color:#8a8a8a;;transform:scaleX(0.9063);"><span class="c" style="width:7.18px"><span style="transform:scaleX(0.950)">段</span></span><span class="c" style="width:7.18px"><span style="transform:scaleX(0.950)">落</span></span></div>
<div class="t" style="left:1026.7px;top:42.22px;font-size:7.56px;color:#6a6a6a;;transform:scaleX(0.8184);"><span class="c" style="width:5.90px"><span style="transform:scaleX(0.780)">オ</span></span><span class="c" style="width:6.05px"><span style="transform:scaleX(0.800)">ー</span></span><span class="c" style="width:5.90px"><span style="transform:scaleX(0.780)">デ</span></span><span class="c" style="width:4.54px"><span style="transform:scaleX(0.600)">ィ</span></span></div>
<svg class="a" style="left:1057px;top:43px;" width="7" height="6" viewBox="0 0 7 6"><path d="M0.8 0.8L3 3L0.8 5.2M3.6 0.8L5.8 3L3.6 5.2" stroke="#e0e0e0" stroke-width="1.3" fill="none"/></svg>
<div class="a" style="left:904px;top:64px;width:11px;height:10px;background:#8c8c80;"></div>
<div class="a" style="left:905px;top:65px;width:9px;height:8px;background:rgb(102,102,91);"></div>
<div class="t" style="left:919px;top:56.46px;font-size:7.08px;color:#8a8a8a;;">R :</div>
<div class="t" style="left:929px;top:56.46px;font-size:7.08px;color:#8a8a8a;;">102</div>
<div class="t" style="left:919px;top:63.46px;font-size:7.08px;color:#8a8a8a;;">G :</div>
<div class="t" style="left:929px;top:63.46px;font-size:7.08px;color:#8a8a8a;;">102</div>
<div class="t" style="left:919px;top:70.46px;font-size:7.08px;color:#8a8a8a;;">B :</div>
<div class="t" style="left:929px;top:70.46px;font-size:7.08px;color:#8a8a8a;;">91</div>
<div class="t" style="left:919px;top:77.46px;font-size:7.08px;color:#8a8a8a;;">A :</div>
<div class="t" style="left:929px;top:77.46px;font-size:7.08px;color:#8a8a8a;;">255</div>
<div class="a" style="left:957px;top:57px;width:1px;height:32px;background:#2e2e2e;"></div>
<div class="t" style="left:968px;top:56.46px;font-size:7.08px;color:#8a8a8a;;">X :  581</div>
<div class="t" style="left:968px;top:63.46px;font-size:7.08px;color:#8a8a8a;;">Y :  472</div>
<svg class="a" style="left:960px;top:68px;" width="8" height="8" viewBox="0 0 8 8"><path d="M4 1V7M1 4H7" stroke="#8a8a8a" stroke-width="0.8"/></svg>
<div class="a" style="left:902px;top:89px;width:160px;height:1px;background:#2c2c2c;"></div>
<div class="t" style="left:904px;top:92.22px;font-size:7.56px;color:#a5a5a5;;transform:scaleX(0.8262);"><span class="c" style="width:5.90px"><span style="transform:scaleX(0.780)">レ</span></span><span class="c" style="width:5.90px"><span style="transform:scaleX(0.780)">イ</span></span><span class="c" style="width:5.90px"><span style="transform:scaleX(0.780)">ヤ</span></span><span class="c" style="width:6.05px"><span style="transform:scaleX(0.800)">ー</span></span> 1<span class="c" style="width:5.90px"><span style="transform:scaleX(0.780)">ア</span></span><span class="c" style="width:5.90px"><span style="transform:scaleX(0.780)">ウ</span></span><span class="c" style="width:5.90px"><span style="transform:scaleX(0.780)">ト</span></span><span class="c" style="width:5.90px"><span style="transform:scaleX(0.780)">ラ</span></span><span class="c" style="width:5.90px"><span style="transform:scaleX(0.780)">イ</span></span><span class="c" style="width:5.90px"><span style="transform:scaleX(0.780)">ン</span></span></div>
<div class="t" style="left:904px;top:99.72px;font-size:7.56px;color:#a5a5a5;;transform:scaleX(0.7688);"><span class="c" style="width:5.90px"><span style="transform:scaleX(0.780)">デ</span></span><span class="c" style="width:4.54px"><span style="transform:scaleX(0.600)">ュ</span></span><span class="c" style="width:5.90px"><span style="transform:scaleX(0.780)">レ</span></span><span class="c" style="width:6.05px"><span style="transform:scaleX(0.800)">ー</span></span><span class="c" style="width:5.90px"><span style="transform:scaleX(0.780)">シ</span></span><span class="c" style="width:4.54px"><span style="transform:scaleX(0.600)">ョ</span></span><span class="c" style="width:5.90px"><span style="transform:scaleX(0.780)">ン</span></span> : 0;00;06;00</div>
<div class="t" style="left:904px;top:107.22px;font-size:7.56px;color:#a5a5a5;;transform:scaleX(0.8218);"><span class="c" style="width:7.18px"><span style="transform:scaleX(0.950)">入</span></span><span class="c" style="width:7.18px"><span style="transform:scaleX(0.950)">力</span></span> : 0;00;00;00, <span class="c" style="width:7.18px"><span style="transform:scaleX(0.950)">出</span></span><span class="c" style="width:7.18px"><span style="transform:scaleX(0.950)">力</span></span> : 0;00;05;29</div>
<div class="t" style="left:906.7px;top:124.22px;font-size:7.56px;color:#c0c0c0;;transform:scaleX(0.8602);"><span class="c" style="width:5.90px"><span style="transform:scaleX(0.780)">プ</span></span><span class="c" style="width:5.90px"><span style="transform:scaleX(0.780)">ロ</span></span><span class="c" style="width:5.90px"><span style="transform:scaleX(0.780)">パ</span></span><span class="c" style="width:5.90px"><span style="transform:scaleX(0.780)">テ</span></span><span class="c" style="width:4.54px"><span style="transform:scaleX(0.600)">ィ</span></span>: <span class="c" style="width:5.90px"><span style="transform:scaleX(0.780)">レ</span></span><span class="c" style="width:5.90px"><span style="transform:scaleX(0.780)">イ</span></span><span class="c" style="width:5.90px"><span style="transform:scaleX(0.780)">ヤ</span></span><span class="c" style="width:6.05px"><span style="transform:scaleX(0.800)">ー</span></span> 1<span class="c" style="width:5.90px"><span style="transform:scaleX(0.780)">ア</span></span><span class="c" style="width:5.90px"><span style="transform:scaleX(0.780)">ウ</span></span><span class="c" style="width:5.90px"><span style="transform:scaleX(0.780)">ト</span></span><span class="c" style="width:5.90px"><span style="transform:scaleX(0.780)">ラ</span></span><span class="c" style="width:5.90px"><span style="transform:scaleX(0.780)">イ</span></span><span class="c" style="width:5.90px"><span style="transform:scaleX(0.780)">ン</span></span></div>
<div class="t" style="left:996px;top:124.03px;font-size:7.93px;color:#777;;">≡</div>
<div class="t" style="left:1013px;top:124.22px;font-size:7.56px;color:#8a8a8a;;transform:scaleX(0.9052);"><span class="c" style="width:5.90px"><span style="transform:scaleX(0.780)">エ</span></span><span class="c" style="width:5.90px"><span style="transform:scaleX(0.780)">フ</span></span><span class="c" style="width:4.54px"><span style="transform:scaleX(0.600)">ェ</span></span><span class="c" style="width:5.90px"><span style="transform:scaleX(0.780)">ク</span></span><span class="c" style="width:5.90px"><span style="transform:scaleX(0.780)">ト</span></span>&</div>
<svg class="a" style="left:1057px;top:125px;" width="7" height="6" viewBox="0 0 7 6"><path d="M0.8 0.8L3 3L0.8 5.2M3.6 0.8L5.8 3L3.6 5.2" stroke="#e0e0e0" stroke-width="1.3" fill="none"/></svg>
<div class="a" style="left:906px;top:133px;width:96px;height:1.4px;background:#d0d0d0;"></div>
<div class="a" style="left:1058px;top:139px;width:5px;height:175px;background:#2b2b2b;"></div>
<div class="t" style="left:906px;top:137.22px;font-size:7.56px;color:#c0c0c0;;transform:scaleX(0.8975);"><span class="c" style="width:5.90px"><span style="transform:scaleX(0.780)">レ</span></span><span class="c" style="width:5.90px"><span style="transform:scaleX(0.780)">イ</span></span><span class="c" style="width:5.90px"><span style="transform:scaleX(0.780)">ヤ</span></span><span class="c" style="width:6.05px"><span style="transform:scaleX(0.800)">ー</span></span><span class="c" style="width:5.90px"><span style="transform:scaleX(0.780)">ト</span></span><span class="c" style="width:5.90px"><span style="transform:scaleX(0.780)">ラ</span></span><span class="c" style="width:5.90px"><span style="transform:scaleX(0.780)">ン</span></span><span class="c" style="width:5.90px"><span style="transform:scaleX(0.780)">ス</span></span><span class="c" style="width:5.90px"><span style="transform:scaleX(0.780)">フ</span></span><span class="c" style="width:4.54px"><span style="transform:scaleX(0.600)">ォ</span></span><span class="c" style="width:6.05px"><span style="transform:scaleX(0.800)">ー</span></span><span class="c" style="width:5.90px"><span style="transform:scaleX(0.780)">ム</span></span></div>
<div class="a" style="left:980px;top:137px;width:14px;height:8px;background:#1e2a3a;"></div>
<div class="t" style="left:982px;top:137.58px;font-size:6.83px;color:#3f86d6;;"><span class="c" style="width:5.33px"><span style="transform:scaleX(0.780)">リ</span></span><span class="c" style="width:5.33px"><span style="transform:scaleX(0.780)">セ</span></span><span class="c" style="width:4.10px"><span style="transform:scaleX(0.600)">ッ</span></span><span class="c" style="width:5.33px"><span style="transform:scaleX(0.780)">ト</span></span></div>
<svg class="a" style="left:912px;top:146.5px;" width="8" height="9" viewBox="0 0 8 9"><circle cx="4" cy="5" r="2.7" fill="none" stroke="#c0c0c0" stroke-width="1"/><path d="M4 1.2V2.4M2.8 1.2H5.2" stroke="#c0c0c0" stroke-width="0.9"/></svg>
<div class="t" style="left:932.5px;top:147.22px;font-size:7.56px;color:#a8a8a8;;transform:scaleX(0.8672);"><span class="c" style="width:5.90px"><span style="transform:scaleX(0.780)">ア</span></span><span class="c" style="width:5.90px"><span style="transform:scaleX(0.780)">ン</span></span><span class="c" style="width:5.90px"><span style="transform:scaleX(0.780)">カ</span></span><span class="c" style="width:6.05px"><span style="transform:scaleX(0.800)">ー</span></span><span class="c" style="width:5.90px"><span style="transform:scaleX(0.780)">ポ</span></span><span class="c" style="width:5.90px"><span style="transform:scaleX(0.780)">イ</span></span><span class="c" style="width:5.90px"><span style="transform:scaleX(0.780)">ン</span></span><span class="c" style="width:5.90px"><span style="transform:scaleX(0.780)">ト</span></span></div>
<div class="t" style="left:981px;top:147.46px;font-size:7.08px;color:#3f86d6;;">67</div>
<div class="a" style="left:981px;top:156.0px;width:25px;height:0.7px;background:#3a3a3a;"></div>
<div class="t" style="left:1008px;top:147.46px;font-size:7.08px;color:#3f86d6;;">66.5</div>
<div class="a" style="left:1008px;top:156.0px;width:25px;height:0.7px;background:#3a3a3a;"></div>
<svg class="a" style="left:912px;top:158.0px;" width="8" height="9" viewBox="0 0 8 9"><circle cx="4" cy="5" r="2.7" fill="none" stroke="#c0c0c0" stroke-width="1"/><path d="M4 1.2V2.4M2.8 1.2H5.2" stroke="#c0c0c0" stroke-width="0.9"/></svg>
<div class="t" style="left:932.5px;top:158.72px;font-size:7.56px;color:#a8a8a8;;transform:scaleX(0.8715);"><span class="c" style="width:7.18px"><span style="transform:scaleX(0.950)">位</span></span><span class="c" style="width:7.18px"><span style="transform:scaleX(0.950)">置</span></span></div>
<div class="t" style="left:981px;top:158.96px;font-size:7.08px;color:#3f86d6;;">743</div>
<div class="a" style="left:981px;top:167.5px;width:25px;height:0.7px;background:#3a3a3a;"></div>
<div class="t" style="left:1008px;top:158.96px;font-size:7.08px;color:#3f86d6;;">256.5</div>
<div class="a" style="left:1008px;top:167.5px;width:25px;height:0.7px;background:#3a3a3a;"></div>
<svg class="a" style="left:912px;top:169.5px;" width="8" height="9" viewBox="0 0 8 9"><circle cx="4" cy="5" r="2.7" fill="none" stroke="#c0c0c0" stroke-width="1"/><path d="M4 1.2V2.4M2.8 1.2H5.2" stroke="#c0c0c0" stroke-width="0.9"/></svg>
<div class="t" style="left:932.5px;top:170.22px;font-size:7.56px;color:#a8a8a8;;transform:scaleX(0.9486);"><span class="c" style="width:5.90px"><span style="transform:scaleX(0.780)">ス</span></span><span class="c" style="width:5.90px"><span style="transform:scaleX(0.780)">ケ</span></span><span class="c" style="width:6.05px"><span style="transform:scaleX(0.800)">ー</span></span><span class="c" style="width:5.90px"><span style="transform:scaleX(0.780)">ル</span></span></div>
<div class="t" style="left:981px;top:170.46px;font-size:7.08px;color:#3f86d6;;">100%</div>
<div class="a" style="left:981px;top:179.0px;width:25px;height:0.7px;background:#3a3a3a;"></div>
<div class="t" style="left:1008px;top:170.46px;font-size:7.08px;color:#3f86d6;;">100%</div>
<div class="a" style="left:1008px;top:179.0px;width:25px;height:0.7px;background:#3a3a3a;"></div>
<svg class="a" style="left:912px;top:181.0px;" width="8" height="9" viewBox="0 0 8 9"><circle cx="4" cy="5" r="2.7" fill="none" stroke="#c0c0c0" stroke-width="1"/><path d="M4 1.2V2.4M2.8 1.2H5.2" stroke="#c0c0c0" stroke-width="0.9"/></svg>
<div class="t" style="left:932.5px;top:181.72px;font-size:7.56px;color:#a8a8a8;;transform:scaleX(0.9063);"><span class="c" style="width:7.18px"><span style="transform:scaleX(0.950)">回</span></span><span class="c" style="width:7.18px"><span style="transform:scaleX(0.950)">転</span></span></div>
<div class="t" style="left:981px;top:181.96px;font-size:7.08px;color:#3f86d6;;">0x+0°</div>
<div class="a" style="left:981px;top:190.5px;width:25px;height:0.7px;background:#3a3a3a;"></div>
<svg class="a" style="left:912px;top:192.5px;" width="8" height="9" viewBox="0 0 8 9"><circle cx="4" cy="5" r="2.7" fill="none" stroke="#c0c0c0" stroke-width="1"/><path d="M4 1.2V2.4M2.8 1.2H5.2" stroke="#c0c0c0" stroke-width="0.9"/></svg>
<div class="t" style="left:932.5px;top:193.22px;font-size:7.56px;color:#a8a8a8;;transform:scaleX(0.9307);"><span class="c" style="width:7.18px"><span style="transform:scaleX(0.950)">不</span></span><span class="c" style="width:7.18px"><span style="transform:scaleX(0.950)">透</span></span><span class="c" style="width:7.18px"><span style="transform:scaleX(0.950)">明</span></span><span class="c" style="width:7.18px"><span style="transform:scaleX(0.950)">度</span></span></div>
<div class="t" style="left:981px;top:193.46px;font-size:7.08px;color:#3f86d6;;">100%</div>
<div class="a" style="left:981px;top:202.0px;width:25px;height:0.7px;background:#3a3a3a;"></div>
<svg class="a" style="left:970px;top:170px;" width="9" height="6" viewBox="0 0 9 6"><rect x="0.5" y="0.5" width="8" height="5" rx="1" fill="#234a7a"/><path d="M2 3H7" stroke="#7aaae0" stroke-width="0.8"/></svg>
<div class="a" style="left:903px;top:205px;width:152px;height:1px;background:#333;"></div>
<div class="t" style="left:906.7px;top:210.22px;font-size:7.56px;color:#c0c0c0;;transform:scaleX(0.8873);"><span class="c" style="width:5.90px"><span style="transform:scaleX(0.780)">レ</span></span><span class="c" style="width:5.90px"><span style="transform:scaleX(0.780)">イ</span></span><span class="c" style="width:5.90px"><span style="transform:scaleX(0.780)">ヤ</span></span><span class="c" style="width:6.05px"><span style="transform:scaleX(0.800)">ー</span></span><span class="c" style="width:5.90px"><span style="transform:scaleX(0.780)">の</span></span><span class="c" style="width:7.18px"><span style="transform:scaleX(0.950)">内</span></span><span class="c" style="width:7.18px"><span style="transform:scaleX(0.950)">容</span></span></div>
<div class="a" style="left:905px;top:221px;width:150px;height:90px;background:#1b1b1b;"></div>
<div class="a" style="left:919px;top:224px;width:134px;height:11px;background:#b0b0b0;"></div>
<div class="a" style="left:920px;top:225px;width:132px;height:9px;background:#3c3c3c;"></div>
<div class="a" style="left:919px;top:246px;width:134px;height:11px;background:#4a4a4a;"></div>
<svg class="a" style="left:908px;top:226px;" width="8" height="6" viewBox="0 0 8 6"><path d="M0.5 3Q4 -0.5 7.5 3Q4 6.5 0.5 3Z" fill="#d8d8d8"/><circle cx="4" cy="3" r="1.2" fill="#1b1b1b"/></svg>
<svg class="a" style="left:908px;top:237px;" width="8" height="6" viewBox="0 0 8 6"><path d="M0.5 3Q4 -0.5 7.5 3Q4 6.5 0.5 3Z" fill="#d8d8d8"/><circle cx="4" cy="3" r="1.2" fill="#1b1b1b"/></svg>
<svg class="a" style="left:908px;top:248px;" width="8" height="6" viewBox="0 0 8 6"><path d="M0.5 3Q4 -0.5 7.5 3Q4 6.5 0.5 3Z" fill="#d8d8d8"/><circle cx="4" cy="3" r="1.2" fill="#1b1b1b"/></svg>
<svg class="a" style="left:922px;top:225.5px;" width="7" height="7" viewBox="0 0 7 7"><path d="M3.5 0.3L4.4 2.5L6.8 2.6L5 4.1L5.6 6.5L3.5 5.2L1.4 6.5L2 4.1L0.2 2.6L2.6 2.5Z" fill="#e0e0e0"/></svg>
<div class="t" style="left:934px;top:225.72px;font-size:7.56px;color:#8a8a8a;;transform:scaleX(0.8568);"><span class="c" style="width:5.90px"><span style="transform:scaleX(0.780)">レ</span></span><span class="c" style="width:5.90px"><span style="transform:scaleX(0.780)">イ</span></span><span class="c" style="width:5.90px"><span style="transform:scaleX(0.780)">ヤ</span></span><span class="c" style="width:6.05px"><span style="transform:scaleX(0.800)">ー</span></span> 1<span class="c" style="width:5.90px"><span style="transform:scaleX(0.780)">ア</span></span><span class="c" style="width:5.90px"><span style="transform:scaleX(0.780)">ウ</span></span><span class="c" style="width:5.90px"><span style="transform:scaleX(0.780)">ト</span></span><span class="c" style="width:5.90px"><span style="transform:scaleX(0.780)">ラ</span></span><span class="c" style="width:5.90px"><span style="transform:scaleX(0.780)">イ</span></span><span class="c" style="width:5.90px"><span style="transform:scaleX(0.780)">ン</span></span></div>
<svg class="a" style="left:935px;top:236.5px;" width="7" height="7" viewBox="0 0 7 7"><path d="M3.5 0.3L4.4 2.5L6.8 2.6L5 4.1L5.6 6.5L3.5 5.2L1.4 6.5L2 4.1L0.2 2.6L2.6 2.5Z" fill="#e0e0e0"/></svg>
<div class="t" style="left:945.8px;top:236.72px;font-size:7.56px;color:#c8c8c8;;transform:scaleX(0.9162);"><span class="c" style="width:5.90px"><span style="transform:scaleX(0.780)">グ</span></span><span class="c" style="width:5.90px"><span style="transform:scaleX(0.780)">ル</span></span><span class="c" style="width:6.05px"><span style="transform:scaleX(0.800)">ー</span></span><span class="c" style="width:5.90px"><span style="transform:scaleX(0.780)">プ</span></span> 1</div>
<svg class="a" style="left:935px;top:247.5px;" width="7" height="7" viewBox="0 0 7 7"><path d="M3.5 0.3L4.4 2.5L6.8 2.6L5 4.1L5.6 6.5L3.5 5.2L1.4 6.5L2 4.1L0.2 2.6L2.6 2.5Z" fill="#e0e0e0"/></svg>
<div class="t" style="left:945.8px;top:247.72px;font-size:7.56px;color:#9a9a9a;;transform:scaleX(0.9162);"><span class="c" style="width:5.90px"><span style="transform:scaleX(0.780)">グ</span></span><span class="c" style="width:5.90px"><span style="transform:scaleX(0.780)">ル</span></span><span class="c" style="width:6.05px"><span style="transform:scaleX(0.800)">ー</span></span><span class="c" style="width:5.90px"><span style="transform:scaleX(0.780)">プ</span></span> 2</div>
<div class="a" style="left:902px;top:314px;width:160px;height:1px;background:#2a2a2a;"></div>
<div class="t" style="left:907px;top:317.22px;font-size:7.56px;color:#c0c0c0;;transform:scaleX(0.9941);"><span class="c" style="width:5.90px"><span style="transform:scaleX(0.780)">シ</span></span><span class="c" style="width:4.54px"><span style="transform:scaleX(0.600)">ェ</span></span><span class="c" style="width:5.90px"><span style="transform:scaleX(0.780)">イ</span></span><span class="c" style="width:5.90px"><span style="transform:scaleX(0.780)">プ</span></span><span class="c" style="width:5.90px"><span style="transform:scaleX(0.780)">プ</span></span><span class="c" style="width:5.90px"><span style="transform:scaleX(0.780)">ロ</span></span><span class="c" style="width:5.90px"><span style="transform:scaleX(0.780)">パ</span></span><span class="c" style="width:5.90px"><span style="transform:scaleX(0.780)">テ</span></span><span class="c" style="width:4.54px"><span style="transform:scaleX(0.600)">ィ</span></span></div>
<div class="a" style="left:980px;top:317px;width:16px;height:8px;background:#1e2a3a;"></div>
<div class="t" style="left:982px;top:317.58px;font-size:6.83px;color:#3f86d6;;"><span class="c" style="width:5.33px"><span style="transform:scaleX(0.780)">リ</span></span><span class="c" style="width:5.33px"><span style="transform:scaleX(0.780)">セ</span></span><span class="c" style="width:4.10px"><span style="transform:scaleX(0.600)">ッ</span></span><span class="c" style="width:5.33px"><span style="transform:scaleX(0.780)">ト</span></span></div>
<svg class="a" style="left:912px;top:331.5px;" width="8" height="9" viewBox="0 0 8 9"><circle cx="4" cy="5" r="2.7" fill="none" stroke="#c0c0c0" stroke-width="1"/><path d="M4 1.2V2.4M2.8 1.2H5.2" stroke="#c0c0c0" stroke-width="0.9"/></svg>
<div class="t" style="left:934px;top:332.22px;font-size:7.56px;color:#a8a8a8;;transform:scaleX(1.1034);"><span class="c" style="width:5.90px"><span style="transform:scaleX(0.780)">パ</span></span><span class="c" style="width:5.90px"><span style="transform:scaleX(0.780)">ス</span></span></div>
<svg class="a" style="left:912px;top:342.8px;" width="8" height="9" viewBox="0 0 8 9"><circle cx="4" cy="5" r="2.7" fill="none" stroke="#c0c0c0" stroke-width="1"/><path d="M4 1.2V2.4M2.8 1.2H5.2" stroke="#c0c0c0" stroke-width="0.9"/></svg>
<div class="t" style="left:934px;top:343.52px;font-size:7.56px;color:#a8a8a8;;transform:scaleX(1.0035);"><span class="c" style="width:7.18px"><span style="transform:scaleX(0.950)">線</span></span><span class="c" style="width:5.90px"><span style="transform:scaleX(0.780)">の</span></span><span class="c" style="width:5.90px"><span style="transform:scaleX(0.780)">カ</span></span><span class="c" style="width:5.90px"><span style="transform:scaleX(0.780)">ラ</span></span><span class="c" style="width:6.05px"><span style="transform:scaleX(0.800)">ー</span></span></div>
<svg class="a" style="left:912px;top:354.1px;" width="8" height="9" viewBox="0 0 8 9"><circle cx="4" cy="5" r="2.7" fill="none" stroke="#c0c0c0" stroke-width="1"/><path d="M4 1.2V2.4M2.8 1.2H5.2" stroke="#c0c0c0" stroke-width="0.9"/></svg>
<div class="t" style="left:934px;top:354.82px;font-size:7.56px;color:#a8a8a8;;transform:scaleX(1.0248);"><span class="c" style="width:7.18px"><span style="transform:scaleX(0.950)">線</span></span><span class="c" style="width:7.18px"><span style="transform:scaleX(0.950)">幅</span></span></div>
<div class="t" style="left:934px;top:366.12px;font-size:7.56px;color:#a8a8a8;;transform:scaleX(1.0248);"><span class="c" style="width:7.18px"><span style="transform:scaleX(0.950)">線</span></span><span class="c" style="width:7.18px"><span style="transform:scaleX(0.950)">端</span></span></div>
<div class="t" style="left:934px;top:377.42px;font-size:7.56px;color:#a8a8a8;;transform:scaleX(1.0582);"><span class="c" style="width:7.18px"><span style="transform:scaleX(0.950)">線</span></span><span class="c" style="width:5.90px"><span style="transform:scaleX(0.780)">の</span></span><span class="c" style="width:7.18px"><span style="transform:scaleX(0.950)">結</span></span><span class="c" style="width:7.18px"><span style="transform:scaleX(0.950)">合</span></span></div>
<div class="a" style="left:979px;top:342.5px;width:10px;height:9.5px;background:#f4f4f4;"></div>
<svg class="a" style="left:991px;top:341px;" width="10" height="11" viewBox="0 0 10 11"><path d="M2 9L7 3L9 5L4 10Z" fill="none" stroke="#d0d0d0" stroke-width="0.9"/><path d="M7 2L10 5" stroke="#d0d0d0" stroke-width="1.4"/></svg>
<div class="a" style="left:1004px;top:341px;width:45px;height:11px;background:#1e1e1e;"></div>
<div class="t" style="left:1007px;top:342.72px;font-size:7.56px;color:#c0c0c0;;"><span class="c" style="width:7.18px"><span style="transform:scaleX(0.950)">単</span></span><span class="c" style="width:7.18px"><span style="transform:scaleX(0.950)">色</span></span></div>
<svg class="a" style="left:1043px;top:345px;" width="6" height="4" viewBox="0 0 6 4"><path d="M0.8 0.8L3 3L5.2 0.8" stroke="#aaa" stroke-width="0.9" fill="none"/></svg>
<div class="t" style="left:982px;top:353.46px;font-size:7.08px;color:#3f86d6;;">4</div>
<div class="a" style="left:980px;top:363px;width:51px;height:24px;background:#1f1f1f;"></div>
<div class="a" style="left:980px;top:375px;width:51px;height:0.8px;background:#2a2a2a;"></div>
<svg class="a" style="left:983.5px;top:364.5px;" width="9" height="9" viewBox="0 0 9 9"><path d="M7 2.5H4.5A2 2 0 0 0 4.5 6.5H7" stroke="#e8e8e8" stroke-width="1.7" fill="none"/><path d="M6 4.5H7.5" stroke="#e8e8e8" stroke-width="1.2"/></svg>
<svg class="a" style="left:983.5px;top:376px;" width="9" height="9" viewBox="0 0 9 9"><path d="M2.5 2V6.5H7.5" stroke="#e8e8e8" stroke-width="1.8" fill="none"/></svg>
<div class="a" style="left:997.0px;top:363px;width:0.8px;height:24px;background:#2a2a2a;"></div>
<div class="a" style="left:980px;top:375px;width:51px;height:0.8px;background:#2a2a2a;"></div>
<svg class="a" style="left:1000.0px;top:364.5px;" width="9" height="9" viewBox="0 0 9 9"><path d="M7.5 2.5H4.5A2 2 0 0 0 4.5 6.5H7.5" stroke="#3f86d6" stroke-width="1.9" fill="none"/></svg>
<svg class="a" style="left:1000.0px;top:376px;" width="9" height="9" viewBox="0 0 9 9"><path d="M2.5 2V4.5A2 2 0 0 0 4.5 6.5H7.5" stroke="#3f86d6" stroke-width="1.8" fill="none"/></svg>
<div class="a" style="left:1013.5px;top:363px;width:0.8px;height:24px;background:#2a2a2a;"></div>
<div class="a" style="left:980px;top:375px;width:51px;height:0.8px;background:#2a2a2a;"></div>
<svg class="a" style="left:1016.5px;top:364.5px;" width="9" height="9" viewBox="0 0 9 9"><path d="M7.5 2.5H2.5V6.5H7.5" stroke="#e8e8e8" stroke-width="1.8" fill="none"/></svg>
<svg class="a" style="left:1016.5px;top:376px;" width="9" height="9" viewBox="0 0 9 9"><path d="M2.5 2V4A2.5 2.5 0 0 0 5 6.5H7.5" stroke="#e8e8e8" stroke-width="1.8" fill="none"/></svg>
<div class="a" style="left:0px;top:392px;width:1067px;height:208px;background:#121a22;"></div>
<div class="a" style="left:0px;top:392.8px;width:1067px;height:2.5px;background:#4a6688;"></div>
<div class="a" style="left:0px;top:393px;width:2.2px;height:207px;background:#2c4868;"></div>
<div class="a" style="left:1064px;top:393px;width:2.5px;height:207px;background:#2c4868;"></div>
<div class="a" style="left:0px;top:597px;width:1067px;height:3px;background:#22384f;"></div>
<div class="a" style="left:2px;top:395.5px;width:1062px;height:201.5px;background:#232323;"></div>
<div class="a" style="left:15px;top:400px;width:5px;height:5px;background:#c8bd98;"></div>
<div class="t" style="left:26px;top:397.84px;font-size:7.32px;color:#7a7a7a;;transform:scaleX(0.7890);">01 Stationery</div>
<div class="a" style="left:92px;top:400px;width:5px;height:5px;background:#c8bd98;"></div>
<div class="t" style="left:103px;top:397.84px;font-size:7.32px;color:#7a7a7a;;transform:scaleX(0.7868);">02 LightBulb</div>
<div class="t" style="left:159px;top:398.14px;font-size:6.71px;color:#777;;">×</div>
<div class="a" style="left:167px;top:400px;width:5px;height:5px;background:#c8bd98;"></div>
<div class="t" style="left:178px;top:397.84px;font-size:7.32px;color:#c8c8c8;;transform:scaleX(0.8322);">03 Gear</div>
<div class="t" style="left:205px;top:397.84px;font-size:7.32px;color:#777;;">≡</div>
<div class="a" style="left:158px;top:405.5px;width:52px;height:1.2px;background:#d0d0d0;"></div>
<div class="t" style="left:10px;top:410.41px;font-size:8.78px;color:#4a8fe0;font-weight:bold;transform:scaleX(0.9792);">0;00;01;14</div>
<div class="t" style="left:8px;top:419.27px;font-size:6.47px;color:#2e5b8e;;transform:scaleX(0.9464);">00044 (29.97 fps)</div>
<div class="a" style="left:64px;top:413.5px;width:165px;height:10px;background:#191919;"></div>
<svg class="a" style="left:66px;top:414.5px;" width="10" height="8" viewBox="0 0 10 8"><circle cx="3.5" cy="3" r="2" fill="none" stroke="#aaa" stroke-width="1"/><path d="M5 4.5L7 6.5" stroke="#aaa" stroke-width="1"/><circle cx="8" cy="6.5" r="0.8" fill="#aaa"/></svg>
<svg class="a" style="left:240px;top:413px;" width="11" height="11" viewBox="0 0 11 11"><path d="M1 2H3M2 2V5M5 3H9M5 5H9M5 7H9" stroke="#c8c8c8" stroke-width="0.9"/></svg>
<svg class="a" style="left:257px;top:413px;" width="11" height="11" viewBox="0 0 11 11"><path d="M1 8H10M2 6H9M3 4H8" stroke="#c8c8c8" stroke-width="1.1"/><circle cx="5.5" cy="2.5" r="1.3" fill="#c8c8c8"/></svg>
<svg class="a" style="left:272px;top:413px;" width="11" height="11" viewBox="0 0 11 11"><rect x="1" y="1" width="6" height="7" fill="#c8c8c8"/><rect x="3" y="3" width="6" height="7" fill="#aaa" stroke="#232323" stroke-width="0.6"/></svg>
<svg class="a" style="left:287px;top:413px;" width="11" height="11" viewBox="0 0 11 11"><ellipse cx="5" cy="5" rx="4" ry="3" transform="rotate(-40 5 5)" fill="none" stroke="#aaa" stroke-width="1.2"/><path d="M3 7L7 3" stroke="#aaa" stroke-width="1"/></svg>
<svg class="a" style="left:305px;top:413px;" width="11" height="11" viewBox="0 0 11 11"><rect x="0.7" y="0.7" width="9" height="8" fill="none" stroke="#c8c8c8" stroke-width="1"/><path d="M2.5 2.5L8 7.5" stroke="#c8c8c8" stroke-width="1"/></svg>
<svg class="a" style="left:3px;top:431px;" width="8" height="6" viewBox="0 0 8 6"><path d="M0.5 3Q4 -0.5 7.5 3Q4 6.5 0.5 3Z" fill="#d8d8d8"/><circle cx="4" cy="3" r="1.2" fill="#232323"/></svg>
<svg class="a" style="left:12px;top:430px;" width="8" height="8" viewBox="0 0 8 8"><circle cx="4" cy="4" r="3" fill="none" stroke="#d0d0d0" stroke-width="0.9"/><path d="M4 1A3 3 0 0 1 4 7Z" fill="#d0d0d0"/></svg>
<svg class="a" style="left:20px;top:430px;" width="8" height="8" viewBox="0 0 8 8"><circle cx="4" cy="4" r="2" fill="#d0d0d0"/></svg>
<svg class="a" style="left:28px;top:429.5px;" width="8" height="9" viewBox="0 0 8 9"><rect x="1.5" y="4" width="5" height="4" fill="#d0d0d0"/><path d="M2.5 4V2.8A1.5 1.5 0 0 1 5.5 2.8V4" stroke="#d0d0d0" stroke-width="0.9" fill="none"/></svg>
<svg class="a" style="left:45px;top:429.5px;" width="9" height="9" viewBox="0 0 9 9"><path d="M1 1H5L8 4L4.5 7.5L1 4Z" fill="#c8c8c8"/><circle cx="3" cy="3" r="0.8" fill="#232323"/></svg>
<div class="t" style="left:60px;top:430.64px;font-size:6.71px;color:#8a8a8a;;">#</div>
<div class="t" style="left:80px;top:430.16px;font-size:7.69px;color:#c0c0c0;;transform:scaleX(0.8920);"><span class="c" style="width:5.99px"><span style="transform:scaleX(0.780)">レ</span></span><span class="c" style="width:5.99px"><span style="transform:scaleX(0.780)">イ</span></span><span class="c" style="width:5.99px"><span style="transform:scaleX(0.780)">ヤ</span></span><span class="c" style="width:6.15px"><span style="transform:scaleX(0.800)">ー</span></span><span class="c" style="width:7.30px"><span style="transform:scaleX(0.950)">名</span></span></div>
<svg class="a" style="left:175px;top:430px;" width="70" height="8" viewBox="0 0 70 8"><path d="M1 7H7M2 5H6" stroke="#c0c0c0" stroke-width="1"/><circle cx="4" cy="3" r="1.3" fill="#c0c0c0"/><path d="M12 4L14 2L16 4L14 6Z" fill="#999"/><path d="M20 1L25 7" stroke="#c0c0c0" stroke-width="0.9"/><text x="26" y="7" font-size="6" font-style="italic" fill="#c0c0c0" font-family="Liberation Serif">fx</text><rect x="34" y="1" width="6" height="6" fill="#b0b0b0"/><rect x="35.5" y="2.5" width="3" height="3" fill="#232323"/><ellipse cx="45" cy="4" rx="3" ry="2.2" transform="rotate(-40 45 4)" fill="none" stroke="#b0b0b0" stroke-width="0.9"/><circle cx="53" cy="4" r="2.7" fill="#c0c0c0"/><path d="M53 1.3A2.7 2.7 0 0 1 53 6.7Z" fill="#444"/><text x="58" y="6.5" font-size="5" fill="#aaa" font-family="Liberation Sans">3D</text></svg>
<div class="t" style="left:253px;top:430.16px;font-size:7.69px;color:#c0c0c0;;transform:scaleX(0.8644);"><span class="c" style="width:7.30px"><span style="transform:scaleX(0.950)">親</span></span><span class="c" style="width:5.99px"><span style="transform:scaleX(0.780)">と</span></span><span class="c" style="width:5.99px"><span style="transform:scaleX(0.780)">リ</span></span><span class="c" style="width:5.99px"><span style="transform:scaleX(0.780)">ン</span></span><span class="c" style="width:5.99px"><span style="transform:scaleX(0.780)">ク</span></span></div>
<div class="a" style="left:2px;top:439px;width:321px;height:1px;background:#1a1a1a;"></div>
<div class="a" style="left:2px;top:440.0px;width:321px;height:9px;background:#3b3b3b;"></div>
<div class="a" style="left:14px;top:440.5px;width:22px;height:8px;background:#333333;"></div>
<div class="a" style="left:20px;top:440.5px;width:0.7px;height:8px;background:#3b3b3b;"></div>
<div class="a" style="left:28px;top:440.5px;width:0.7px;height:8px;background:#3b3b3b;"></div>
<div class="a" style="left:200px;top:440.5px;width:53px;height:8px;background:#353535;"></div>
<div class="a" style="left:263px;top:440.5px;width:49px;height:8px;background:#232323;"></div>
<div class="a" style="left:312px;top:440.0px;width:11px;height:9px;background:#555;"></div>
<svg class="a" style="left:3px;top:441.5px;" width="9" height="6" viewBox="0 0 9 6"><path d="M0.5 3Q4.5 -0.8 8.5 3Q4.5 6.8 0.5 3Z" fill="#e0e0e0"/><circle cx="4.5" cy="3" r="1.3" fill="#232323"/></svg>
<svg class="a" style="left:41px;top:441.5px;" width="6" height="6" viewBox="0 0 6 6"><path d="M1 1.5L3 3.5L5 1.5" stroke="#9a9a9a" stroke-width="0.8" fill="none"/></svg>
<div class="a" style="left:48px;top:440.5px;width:8px;height:8px;background:#6c78e8;"></div>
<div class="t" style="left:61px;top:440.84px;font-size:7.32px;color:#c0c0c0;;">1</div>
<svg class="a" style="left:76px;top:441.0px;" width="7" height="7" viewBox="0 0 7 7"><path d="M3.5 0.3L4.4 2.5L6.8 2.6L5 4.1L5.6 6.5L3.5 5.2L1.4 6.5L2 4.1L0.2 2.6L2.6 2.5Z" fill="#e0e0e0"/></svg>
<div class="a" style="left:86px;top:439.5px;width:86px;height:10px;background:#b8b8b8;"></div>
<div class="a" style="left:87px;top:440.5px;width:84px;height:8px;background:#3a3a3a;"></div>
<div class="t" style="left:88.5px;top:440.72px;font-size:7.56px;color:#9a9a9a;;transform:scaleX(0.9639);"><span class="c" style="width:5.90px"><span style="transform:scaleX(0.780)">レ</span></span><span class="c" style="width:5.90px"><span style="transform:scaleX(0.780)">イ</span></span><span class="c" style="width:5.90px"><span style="transform:scaleX(0.780)">ヤ</span></span><span class="c" style="width:6.05px"><span style="transform:scaleX(0.800)">ー</span></span> 1<span class="c" style="width:5.90px"><span style="transform:scaleX(0.780)">ア</span></span><span class="c" style="width:5.90px"><span style="transform:scaleX(0.780)">ウ</span></span><span class="c" style="width:5.90px"><span style="transform:scaleX(0.780)">ト</span></span><span class="c" style="width:5.90px"><span style="transform:scaleX(0.780)">ラ</span></span><span class="c" style="width:5.90px"><span style="transform:scaleX(0.780)">イ</span></span><span class="c" style="width:5.90px"><span style="transform:scaleX(0.780)">ン</span></span></div>
<svg class="a" style="left:175px;top:440.5px;" width="24" height="8" viewBox="0 0 24 8"><path d="M3 1L6 4L3 7L0 4Z" fill="#c0c0c0"/><path d="M11 2L13 4L11 6L9 4Z" fill="#777"/><path d="M17 7L23 1" stroke="#d0d0d0" stroke-width="1"/></svg>
<svg class="a" style="left:251px;top:440.5px;" width="9" height="8" viewBox="0 0 9 8"><circle cx="4.5" cy="4" r="3" fill="#666"/><circle cx="4.5" cy="4" r="1.5" fill="#888"/></svg>
<div class="t" style="left:267px;top:440.72px;font-size:7.56px;color:#c8c8c8;;transform:scaleX(1.0186);"><span class="c" style="width:5.90px"><span style="transform:scaleX(0.780)">な</span></span><span class="c" style="width:5.90px"><span style="transform:scaleX(0.780)">し</span></span></div>
<svg class="a" style="left:305px;top:442.5px;" width="6" height="4" viewBox="0 0 6 4"><path d="M0.8 0.8L3 3L5.2 0.8" stroke="#999" stroke-width="0.9" fill="none"/></svg>
<div class="a" style="left:2px;top:450.5px;width:321px;height:105px;background:#232323;"></div>
<svg class="a" style="left:50px;top:452.0px;" width="6" height="6" viewBox="0 0 6 6"><path d="M1 1.5L3 3.5L5 1.5" stroke="#9a9a9a" stroke-width="0.8" fill="none"/></svg>
<div class="t" style="left:61px;top:451.22px;font-size:7.56px;color:#c0c0c0;;transform:scaleX(0.8488);"><span class="c" style="width:5.90px"><span style="transform:scaleX(0.780)">コ</span></span><span class="c" style="width:5.90px"><span style="transform:scaleX(0.780)">ン</span></span><span class="c" style="width:5.90px"><span style="transform:scaleX(0.780)">テ</span></span><span class="c" style="width:5.90px"><span style="transform:scaleX(0.780)">ン</span></span><span class="c" style="width:5.90px"><span style="transform:scaleX(0.780)">ツ</span></span></div>
<div class="t" style="left:224.8px;top:451.34px;font-size:7.32px;color:#b0b0b0;;transform:scaleX(0.8649);"><span class="c" style="width:6.95px"><span style="transform:scaleX(0.950)">追</span></span><span class="c" style="width:6.95px"><span style="transform:scaleX(0.950)">加</span></span></div>
<svg class="a" style="left:239px;top:451.5px;" width="7" height="7" viewBox="0 0 7 7"><circle cx="3.5" cy="3.5" r="3" fill="#e0e0e0"/><path d="M2.6 2L4.6 3.5L2.6 5Z" fill="#232323"/></svg>
<svg class="a" style="left:3px;top:462.5px;" width="9" height="6" viewBox="0 0 9 6"><path d="M0.5 3Q4.5 -0.8 8.5 3Q4.5 6.8 0.5 3Z" fill="#e0e0e0"/><circle cx="4.5" cy="3" r="1.3" fill="#232323"/></svg>
<svg class="a" style="left:3px;top:473.0px;" width="9" height="6" viewBox="0 0 9 6"><path d="M0.5 3Q4.5 -0.8 8.5 3Q4.5 6.8 0.5 3Z" fill="#e0e0e0"/><circle cx="4.5" cy="3" r="1.3" fill="#232323"/></svg>
<svg class="a" style="left:3px;top:483.5px;" width="9" height="6" viewBox="0 0 9 6"><path d="M0.5 3Q4.5 -0.8 8.5 3Q4.5 6.8 0.5 3Z" fill="#e0e0e0"/><circle cx="4.5" cy="3" r="1.3" fill="#232323"/></svg>
<svg class="a" style="left:3px;top:504.5px;" width="9" height="6" viewBox="0 0 9 6"><path d="M0.5 3Q4.5 -0.8 8.5 3Q4.5 6.8 0.5 3Z" fill="#e0e0e0"/><circle cx="4.5" cy="3" r="1.3" fill="#232323"/></svg>
<svg class="a" style="left:3px;top:515.0px;" width="9" height="6" viewBox="0 0 9 6"><path d="M0.5 3Q4.5 -0.8 8.5 3Q4.5 6.8 0.5 3Z" fill="#e0e0e0"/><circle cx="4.5" cy="3" r="1.3" fill="#232323"/></svg>
<svg class="a" style="left:63px;top:462.5px;" width="6" height="6" viewBox="0 0 6 6"><path d="M1.5 1L3.5 3L1.5 5" stroke="#9a9a9a" stroke-width="0.8" fill="none"/></svg>
<div class="t" style="left:72px;top:461.72px;font-size:7.56px;color:#c0c0c0;;transform:scaleX(0.9328);"><span class="c" style="width:5.90px"><span style="transform:scaleX(0.780)">グ</span></span><span class="c" style="width:5.90px"><span style="transform:scaleX(0.780)">ル</span></span><span class="c" style="width:6.05px"><span style="transform:scaleX(0.800)">ー</span></span><span class="c" style="width:5.90px"><span style="transform:scaleX(0.780)">プ</span></span> 1</div>
<div class="a" style="left:71px;top:472.0px;width:103px;height:9px;background:#4a4a4a;"></div>
<svg class="a" style="left:62px;top:473.0px;" width="6" height="6" viewBox="0 0 6 6"><path d="M1 1.5L3 3.5L5 1.5" stroke="#9a9a9a" stroke-width="0.8" fill="none"/></svg>
<div class="t" style="left:72px;top:472.22px;font-size:7.56px;color:#c0c0c0;;transform:scaleX(0.9328);"><span class="c" style="width:5.90px"><span style="transform:scaleX(0.780)">グ</span></span><span class="c" style="width:5.90px"><span style="transform:scaleX(0.780)">ル</span></span><span class="c" style="width:6.05px"><span style="transform:scaleX(0.800)">ー</span></span><span class="c" style="width:5.90px"><span style="transform:scaleX(0.780)">プ</span></span> 2</div>
<div class="a" style="left:81px;top:482.5px;width:93px;height:9px;background:#3d3d3d;"></div>
<svg class="a" style="left:73px;top:483.5px;" width="6" height="6" viewBox="0 0 6 6"><path d="M1 1.5L3 3.5L5 1.5" stroke="#9a9a9a" stroke-width="0.8" fill="none"/></svg>
<div class="t" style="left:83px;top:482.72px;font-size:7.56px;color:#777;;transform:scaleX(1.0510);"><span class="c" style="width:5.90px"><span style="transform:scaleX(0.780)">パ</span></span><span class="c" style="width:5.90px"><span style="transform:scaleX(0.780)">ス</span></span> 1</div>
<div class="a" style="left:177px;top:484.0px;width:6px;height:6px;background:#1f4f8f;"></div>
<div class="t" style="left:184px;top:482.84px;font-size:7.32px;color:#c0c0c0;;">〜</div>
<svg class="a" style="left:95px;top:492.5px;" width="8" height="9" viewBox="0 0 8 9"><circle cx="4" cy="5" r="2.7" fill="none" stroke="#c0c0c0" stroke-width="1"/><path d="M4 1.2V2.4M2.8 1.2H5.2" stroke="#c0c0c0" stroke-width="0.9"/></svg>
<div class="t" style="left:104px;top:493.22px;font-size:7.56px;color:#c0c0c0;;transform:scaleX(1.0186);"><span class="c" style="width:5.90px"><span style="transform:scaleX(0.780)">パ</span></span><span class="c" style="width:5.90px"><span style="transform:scaleX(0.780)">ス</span></span></div>
<svg class="a" style="left:259px;top:493.5px;" width="8" height="7" viewBox="0 0 8 7"><circle cx="4" cy="3.5" r="2.8" fill="#555"/><circle cx="4" cy="3.5" r="1.3" fill="#777"/></svg>
<svg class="a" style="left:74px;top:504.5px;" width="6" height="6" viewBox="0 0 6 6"><path d="M1.5 1L3.5 3L1.5 5" stroke="#9a9a9a" stroke-width="0.8" fill="none"/></svg>
<div class="t" style="left:83px;top:503.72px;font-size:7.56px;color:#c0c0c0;;transform:scaleX(0.9359);"><span class="c" style="width:5.90px"><span style="transform:scaleX(0.780)">パ</span></span><span class="c" style="width:5.90px"><span style="transform:scaleX(0.780)">ス</span></span><span class="c" style="width:5.90px"><span style="transform:scaleX(0.780)">の</span></span><span class="c" style="width:5.90px"><span style="transform:scaleX(0.780)">ト</span></span><span class="c" style="width:5.90px"><span style="transform:scaleX(0.780)">リ</span></span><span class="c" style="width:5.90px"><span style="transform:scaleX(0.780)">ミ</span></span><span class="c" style="width:5.90px"><span style="transform:scaleX(0.780)">ン</span></span><span class="c" style="width:5.90px"><span style="transform:scaleX(0.780)">グ</span></span> 1</div>
<svg class="a" style="left:74px;top:515.0px;" width="6" height="6" viewBox="0 0 6 6"><path d="M1.5 1L3.5 3L1.5 5" stroke="#9a9a9a" stroke-width="0.8" fill="none"/></svg>
<div class="t" style="left:83px;top:514.22px;font-size:7.56px;color:#c0c0c0;;transform:scaleX(0.9652);"><span class="c" style="width:7.18px"><span style="transform:scaleX(0.950)">線</span></span> 1</div>
<svg class="a" style="left:74px;top:525.5px;" width="6" height="6" viewBox="0 0 6 6"><path d="M1.5 1L3.5 3L1.5 5" stroke="#9a9a9a" stroke-width="0.8" fill="none"/></svg>
<div class="t" style="left:83px;top:524.72px;font-size:7.56px;color:#c0c0c0;;transform:scaleX(0.9971);"><span class="c" style="width:5.90px"><span style="transform:scaleX(0.780)">ト</span></span><span class="c" style="width:5.90px"><span style="transform:scaleX(0.780)">ラ</span></span><span class="c" style="width:5.90px"><span style="transform:scaleX(0.780)">ン</span></span><span class="c" style="width:5.90px"><span style="transform:scaleX(0.780)">ス</span></span><span class="c" style="width:5.90px"><span style="transform:scaleX(0.780)">フ</span></span><span class="c" style="width:4.54px"><span style="transform:scaleX(0.600)">ォ</span></span><span class="c" style="width:6.05px"><span style="transform:scaleX(0.800)">ー</span></span><span class="c" style="width:5.90px"><span style="transform:scaleX(0.780)">ム</span></span> : <span class="c" style="width:5.90px"><span style="transform:scaleX(0.780)">グ</span></span><span class="c" style="width:5.90px"><span style="transform:scaleX(0.780)">ル</span></span><span class="c" style="width:6.05px"><span style="transform:scaleX(0.800)">ー</span></span><span class="c" style="width:5.90px"><span style="transform:scaleX(0.780)">プ</span></span> 2</div>
<svg class="a" style="left:52px;top:536.0px;" width="6" height="6" viewBox="0 0 6 6"><path d="M1.5 1L3.5 3L1.5 5" stroke="#9a9a9a" stroke-width="0.8" fill="none"/></svg>
<div class="t" style="left:61px;top:535.22px;font-size:7.56px;color:#c8c8c8;;transform:scaleX(1.0235);"><span class="c" style="width:5.90px"><span style="transform:scaleX(0.780)">ト</span></span><span class="c" style="width:5.90px"><span style="transform:scaleX(0.780)">ラ</span></span><span class="c" style="width:5.90px"><span style="transform:scaleX(0.780)">ン</span></span><span class="c" style="width:5.90px"><span style="transform:scaleX(0.780)">ス</span></span><span class="c" style="width:5.90px"><span style="transform:scaleX(0.780)">フ</span></span><span class="c" style="width:4.54px"><span style="transform:scaleX(0.600)">ォ</span></span><span class="c" style="width:6.05px"><span style="transform:scaleX(0.800)">ー</span></span><span class="c" style="width:5.90px"><span style="transform:scaleX(0.780)">ム</span></span></div>
<div class="t" style="left:176px;top:535.58px;font-size:6.83px;color:#3f86d6;;transform:scaleX(0.7471);"><span class="c" style="width:5.33px"><span style="transform:scaleX(0.780)">リ</span></span><span class="c" style="width:5.33px"><span style="transform:scaleX(0.780)">セ</span></span><span class="c" style="width:4.10px"><span style="transform:scaleX(0.600)">ッ</span></span><span class="c" style="width:5.33px"><span style="transform:scaleX(0.780)">ト</span></span></div>
<div class="a" style="left:179px;top:461.5px;width:67px;height:9px;background:#1c1c1c;"></div>
<div class="t" style="left:181px;top:461.72px;font-size:7.56px;color:#c8c8c8;;transform:scaleX(0.9760);"><span class="c" style="width:7.18px"><span style="transform:scaleX(0.950)">通</span></span><span class="c" style="width:7.18px"><span style="transform:scaleX(0.950)">常</span></span></div>
<svg class="a" style="left:240px;top:463.5px;" width="6" height="4" viewBox="0 0 6 4"><path d="M0.8 0.8L3 3L5.2 0.8" stroke="#999" stroke-width="0.9" fill="none"/></svg>
<div class="a" style="left:179px;top:472.0px;width:67px;height:9px;background:#1c1c1c;"></div>
<div class="t" style="left:181px;top:472.22px;font-size:7.56px;color:#c8c8c8;;transform:scaleX(0.9760);"><span class="c" style="width:7.18px"><span style="transform:scaleX(0.950)">通</span></span><span class="c" style="width:7.18px"><span style="transform:scaleX(0.950)">常</span></span></div>
<svg class="a" style="left:240px;top:474.0px;" width="6" height="4" viewBox="0 0 6 4"><path d="M0.8 0.8L3 3L5.2 0.8" stroke="#999" stroke-width="0.9" fill="none"/></svg>
<div class="a" style="left:179px;top:514.0px;width:67px;height:9px;background:#1c1c1c;"></div>
<div class="t" style="left:181px;top:514.22px;font-size:7.56px;color:#c8c8c8;;transform:scaleX(0.9760);"><span class="c" style="width:7.18px"><span style="transform:scaleX(0.950)">通</span></span><span class="c" style="width:7.18px"><span style="transform:scaleX(0.950)">常</span></span></div>
<svg class="a" style="left:240px;top:516.0px;" width="6" height="4" viewBox="0 0 6 4"><path d="M0.8 0.8L3 3L5.2 0.8" stroke="#999" stroke-width="0.9" fill="none"/></svg>
<div class="a" style="left:2px;top:545.5px;width:321px;height:9.5px;background:#2a2a2a;"></div>
<div class="a" style="left:14px;top:546.0px;width:22px;height:8px;background:#262626;"></div>
<svg class="a" style="left:3px;top:546.5px;" width="9" height="6" viewBox="0 0 9 6"><path d="M0.5 3Q4.5 -0.8 8.5 3Q4.5 6.8 0.5 3Z" fill="#e0e0e0"/><circle cx="4.5" cy="3" r="1.3" fill="#232323"/></svg>
<svg class="a" style="left:41px;top:546.5px;" width="6" height="6" viewBox="0 0 6 6"><path d="M1.5 1L3.5 3L1.5 5" stroke="#9a9a9a" stroke-width="0.8" fill="none"/></svg>
<div class="a" style="left:48px;top:546.0px;width:8px;height:8px;background:#6c78e8;"></div>
<div class="t" style="left:61px;top:545.84px;font-size:7.32px;color:#a0a0a0;;">2</div>
<svg class="a" style="left:76px;top:546.0px;" width="7" height="7" viewBox="0 0 7 7"><path d="M3.5 0.3L4.4 2.5L6.8 2.6L5 4.1L5.6 6.5L3.5 5.2L1.4 6.5L2 4.1L0.2 2.6L2.6 2.5Z" fill="#e0e0e0"/></svg>
<div class="t" style="left:88px;top:545.72px;font-size:7.56px;color:#c8c8c8;;transform:scaleX(0.9639);"><span class="c" style="width:5.90px"><span style="transform:scaleX(0.780)">レ</span></span><span class="c" style="width:5.90px"><span style="transform:scaleX(0.780)">イ</span></span><span class="c" style="width:5.90px"><span style="transform:scaleX(0.780)">ヤ</span></span><span class="c" style="width:6.05px"><span style="transform:scaleX(0.800)">ー</span></span> 2<span class="c" style="width:5.90px"><span style="transform:scaleX(0.780)">ア</span></span><span class="c" style="width:5.90px"><span style="transform:scaleX(0.780)">ウ</span></span><span class="c" style="width:5.90px"><span style="transform:scaleX(0.780)">ト</span></span><span class="c" style="width:5.90px"><span style="transform:scaleX(0.780)">ラ</span></span><span class="c" style="width:5.90px"><span style="transform:scaleX(0.780)">イ</span></span><span class="c" style="width:5.90px"><span style="transform:scaleX(0.780)">ン</span></span></div>
<svg class="a" style="left:175px;top:545.5px;" width="24" height="8" viewBox="0 0 24 8"><path d="M1 7H7M2 5H6" stroke="#c0c0c0" stroke-width="1"/><circle cx="4" cy="3" r="1.3" fill="#c0c0c0"/><path d="M11 2L13 4L11 6L9 4Z" fill="#777"/><path d="M17 7L23 1" stroke="#d0d0d0" stroke-width="1"/></svg>
<div class="a" style="left:218px;top:546.0px;width:26px;height:8px;background:#303030;"></div>
<div class="a" style="left:14px;top:546.0px;width:22px;height:8px;background:#2f2f2f;"></div>
<svg class="a" style="left:251px;top:545.5px;" width="9" height="8" viewBox="0 0 9 8"><circle cx="4.5" cy="4" r="3" fill="#666"/><circle cx="4.5" cy="4" r="1.5" fill="#888"/></svg>
<div class="a" style="left:263px;top:546.0px;width:49px;height:8px;background:#1e1e1e;"></div>
<div class="t" style="left:267px;top:545.72px;font-size:7.56px;color:#c8c8c8;;"><span class="c" style="width:5.90px"><span style="transform:scaleX(0.780)">な</span></span><span class="c" style="width:5.90px"><span style="transform:scaleX(0.780)">し</span></span></div>
<svg class="a" style="left:305px;top:547.5px;" width="6" height="4" viewBox="0 0 6 4"><path d="M0.8 0.8L3 3L5.2 0.8" stroke="#999" stroke-width="0.9" fill="none"/></svg>
<div class="a" style="left:2px;top:556.0px;width:321px;height:9.5px;background:#2a2a2a;"></div>
<div class="a" style="left:14px;top:556.5px;width:22px;height:8px;background:#262626;"></div>
<svg class="a" style="left:3px;top:557.0px;" width="9" height="6" viewBox="0 0 9 6"><path d="M0.5 3Q4.5 -0.8 8.5 3Q4.5 6.8 0.5 3Z" fill="#e0e0e0"/><circle cx="4.5" cy="3" r="1.3" fill="#232323"/></svg>
<svg class="a" style="left:41px;top:557.0px;" width="6" height="6" viewBox="0 0 6 6"><path d="M1.5 1L3.5 3L1.5 5" stroke="#9a9a9a" stroke-width="0.8" fill="none"/></svg>
<div class="a" style="left:48px;top:556.5px;width:8px;height:8px;background:#6c78e8;"></div>
<div class="t" style="left:61px;top:556.34px;font-size:7.32px;color:#a0a0a0;;">3</div>
<svg class="a" style="left:76px;top:556.5px;" width="7" height="7" viewBox="0 0 7 7"><path d="M3.5 0.3L4.4 2.5L6.8 2.6L5 4.1L5.6 6.5L3.5 5.2L1.4 6.5L2 4.1L0.2 2.6L2.6 2.5Z" fill="#e0e0e0"/></svg>
<div class="t" style="left:88px;top:556.22px;font-size:7.56px;color:#c8c8c8;;transform:scaleX(0.8064);">Shadow</div>
<svg class="a" style="left:175px;top:556.0px;" width="24" height="8" viewBox="0 0 24 8"><path d="M1 7H7M2 5H6" stroke="#c0c0c0" stroke-width="1"/><circle cx="4" cy="3" r="1.3" fill="#c0c0c0"/><path d="M11 2L13 4L11 6L9 4Z" fill="#777"/><path d="M17 7L23 1" stroke="#d0d0d0" stroke-width="1"/></svg>
<div class="a" style="left:218px;top:556.5px;width:26px;height:8px;background:#303030;"></div>
<div class="a" style="left:14px;top:556.5px;width:22px;height:8px;background:#2f2f2f;"></div>
<svg class="a" style="left:251px;top:556.0px;" width="9" height="8" viewBox="0 0 9 8"><circle cx="4.5" cy="4" r="3" fill="#666"/><circle cx="4.5" cy="4" r="1.5" fill="#888"/></svg>
<div class="a" style="left:263px;top:556.5px;width:49px;height:8px;background:#1e1e1e;"></div>
<div class="t" style="left:267px;top:556.22px;font-size:7.56px;color:#c8c8c8;;"><span class="c" style="width:5.90px"><span style="transform:scaleX(0.780)">な</span></span><span class="c" style="width:5.90px"><span style="transform:scaleX(0.780)">し</span></span></div>
<svg class="a" style="left:305px;top:558.0px;" width="6" height="4" viewBox="0 0 6 4"><path d="M0.8 0.8L3 3L5.2 0.8" stroke="#999" stroke-width="0.9" fill="none"/></svg>
<div class="a" style="left:2px;top:566.5px;width:321px;height:9.5px;background:#2a2a2a;"></div>
<div class="a" style="left:14px;top:567.0px;width:22px;height:8px;background:#262626;"></div>
<svg class="a" style="left:3px;top:567.5px;" width="9" height="6" viewBox="0 0 9 6"><path d="M0.5 3Q4.5 -0.8 8.5 3Q4.5 6.8 0.5 3Z" fill="#e0e0e0"/><circle cx="4.5" cy="3" r="1.3" fill="#232323"/></svg>
<svg class="a" style="left:41px;top:567.5px;" width="6" height="6" viewBox="0 0 6 6"><path d="M1.5 1L3.5 3L1.5 5" stroke="#9a9a9a" stroke-width="0.8" fill="none"/></svg>
<div class="a" style="left:48px;top:567.0px;width:8px;height:8px;background:#6c78e8;"></div>
<div class="t" style="left:61px;top:566.84px;font-size:7.32px;color:#a0a0a0;;">4</div>
<svg class="a" style="left:76px;top:567.0px;" width="7" height="7" viewBox="0 0 7 7"><path d="M3.5 0.3L4.4 2.5L6.8 2.6L5 4.1L5.6 6.5L3.5 5.2L1.4 6.5L2 4.1L0.2 2.6L2.6 2.5Z" fill="#e0e0e0"/></svg>
<div class="t" style="left:88px;top:566.72px;font-size:7.56px;color:#c8c8c8;;transform:scaleX(0.8507);">1a <span class="c" style="width:5.90px"><span style="transform:scaleX(0.780)">ア</span></span><span class="c" style="width:5.90px"><span style="transform:scaleX(0.780)">ウ</span></span><span class="c" style="width:5.90px"><span style="transform:scaleX(0.780)">ト</span></span><span class="c" style="width:5.90px"><span style="transform:scaleX(0.780)">ラ</span></span><span class="c" style="width:5.90px"><span style="transform:scaleX(0.780)">イ</span></span><span class="c" style="width:5.90px"><span style="transform:scaleX(0.780)">ン</span></span></div>
<svg class="a" style="left:175px;top:566.5px;" width="24" height="8" viewBox="0 0 24 8"><path d="M1 7H7M2 5H6" stroke="#c0c0c0" stroke-width="1"/><circle cx="4" cy="3" r="1.3" fill="#c0c0c0"/><path d="M11 2L13 4L11 6L9 4Z" fill="#777"/><path d="M17 7L23 1" stroke="#d0d0d0" stroke-width="1"/></svg>
<div class="a" style="left:218px;top:567.0px;width:26px;height:8px;background:#303030;"></div>
<div class="a" style="left:14px;top:567.0px;width:22px;height:8px;background:#2f2f2f;"></div>
<svg class="a" style="left:251px;top:566.5px;" width="9" height="8" viewBox="0 0 9 8"><circle cx="4.5" cy="4" r="3" fill="#666"/><circle cx="4.5" cy="4" r="1.5" fill="#888"/></svg>
<div class="a" style="left:263px;top:567.0px;width:49px;height:8px;background:#1e1e1e;"></div>
<div class="t" style="left:267px;top:566.72px;font-size:7.56px;color:#c8c8c8;;"><span class="c" style="width:5.90px"><span style="transform:scaleX(0.780)">な</span></span><span class="c" style="width:5.90px"><span style="transform:scaleX(0.780)">し</span></span></div>
<svg class="a" style="left:305px;top:568.5px;" width="6" height="4" viewBox="0 0 6 4"><path d="M0.8 0.8L3 3L5.2 0.8" stroke="#999" stroke-width="0.9" fill="none"/></svg>
<div class="a" style="left:2px;top:587px;width:1062px;height:10px;background:#1e1e1e;"></div>
<svg class="a" style="left:4px;top:589.5px;" width="9" height="9" viewBox="0 0 9 9"><path d="M1.5 1.5H6L7.5 3V7.5H1.5Z" fill="none" stroke="#4a8fe0" stroke-width="1.2"/></svg>
<svg class="a" style="left:15px;top:589.5px;" width="9" height="9" viewBox="0 0 9 9"><circle cx="4.5" cy="4.5" r="2.8" fill="none" stroke="#c0c0c0" stroke-width="1"/><circle cx="3.5" cy="3.5" r="1.5" fill="none" stroke="#c0c0c0" stroke-width="0.8"/></svg>
<svg class="a" style="left:26px;top:589.5px;" width="9" height="9" viewBox="0 0 9 9"><circle cx="4.5" cy="4.5" r="2.8" fill="none" stroke="#999" stroke-width="1"/><circle cx="4.5" cy="4.5" r="1" fill="#999"/></svg>
<svg class="a" style="left:36px;top:589.5px;" width="9" height="9" viewBox="0 0 9 9"><rect x="1.5" y="2.5" width="6" height="4" fill="#c0c0c0"/><rect x="2.5" y="1.5" width="2" height="1" fill="#c0c0c0"/></svg>
<div class="t" style="left:58.8px;top:590.22px;font-size:7.56px;color:#b0b0b0;;transform:scaleX(0.8855);"><span class="c" style="width:5.90px"><span style="transform:scaleX(0.780)">フ</span></span><span class="c" style="width:5.90px"><span style="transform:scaleX(0.780)">レ</span></span><span class="c" style="width:6.05px"><span style="transform:scaleX(0.800)">ー</span></span><span class="c" style="width:5.90px"><span style="transform:scaleX(0.780)">ム</span></span><span class="c" style="width:5.90px"><span style="transform:scaleX(0.780)">レ</span></span><span class="c" style="width:5.90px"><span style="transform:scaleX(0.780)">ン</span></span><span class="c" style="width:5.90px"><span style="transform:scaleX(0.780)">ダ</span></span><span class="c" style="width:5.90px"><span style="transform:scaleX(0.780)">リ</span></span><span class="c" style="width:5.90px"><span style="transform:scaleX(0.780)">ン</span></span><span class="c" style="width:5.90px"><span style="transform:scaleX(0.780)">グ</span></span><span class="c" style="width:7.18px"><span style="transform:scaleX(0.950)">時</span></span><span class="c" style="width:7.18px"><span style="transform:scaleX(0.950)">間</span></span></div>
<div class="a" style="left:125px;top:590px;width:14px;height:7px;background:#203a20;"></div>
<div class="t" style="left:127px;top:590.57px;font-size:6.47px;color:#5fae5f;;">4ms</div>
<div class="a" style="left:176px;top:589px;width:71px;height:8px;background:#2a2a2a;"></div>
<div class="t" style="left:190px;top:589.72px;font-size:7.56px;color:#9a9a9a;;transform:scaleX(0.9390);"><span class="c" style="width:5.90px"><span style="transform:scaleX(0.780)">ス</span></span><span class="c" style="width:5.90px"><span style="transform:scaleX(0.780)">イ</span></span><span class="c" style="width:4.54px"><span style="transform:scaleX(0.600)">ッ</span></span><span class="c" style="width:5.90px"><span style="transform:scaleX(0.780)">チ</span></span> / <span class="c" style="width:5.90px"><span style="transform:scaleX(0.780)">モ</span></span><span class="c" style="width:6.05px"><span style="transform:scaleX(0.800)">ー</span></span><span class="c" style="width:5.90px"><span style="transform:scaleX(0.780)">ド</span></span></div>
<div class="a" style="left:323px;top:395.5px;width:3px;height:201px;background:#161616;"></div>
<div class="a" style="left:326px;top:412px;width:730px;height:5px;background:#606060;"></div>
<div class="a" style="left:326px;top:412px;width:730px;height:2px;background:#767676;"></div>
<div class="a" style="left:326px;top:411.5px;width:3px;height:5.5px;background:#3d8de6;"></div>
<div class="a" style="left:1053px;top:411.5px;width:3px;height:5.5px;background:#3d8de6;"></div>
<div class="a" style="left:326px;top:417px;width:730px;height:10.5px;background:#1c1c1c;"></div>
<div class="t" style="left:318.0px;width:24px;text-align:center;top:418.5px;font-size:6px;font-weight:bold;color:#d0d0d0">00f</div>
<div class="a" style="left:330px;top:425px;width:1px;height:2px;background:#666;"></div>
<div class="t" style="left:358.0px;width:24px;text-align:center;top:418.5px;font-size:6px;font-weight:bold;color:#d0d0d0">10f</div>
<div class="a" style="left:370px;top:425px;width:1px;height:2px;background:#666;"></div>
<div class="t" style="left:398.0px;width:24px;text-align:center;top:418.5px;font-size:6px;font-weight:bold;color:#d0d0d0">20f</div>
<div class="a" style="left:410px;top:425px;width:1px;height:2px;background:#666;"></div>
<div class="t" style="left:438.0px;width:24px;text-align:center;top:418.5px;font-size:6px;font-weight:bold;color:#d0d0d0">01:00f</div>
<div class="a" style="left:450px;top:425px;width:1px;height:2px;background:#666;"></div>
<div class="t" style="left:478.0px;width:24px;text-align:center;top:418.5px;font-size:6px;font-weight:bold;color:#d0d0d0">10f</div>
<div class="a" style="left:490px;top:425px;width:1px;height:2px;background:#666;"></div>
<div class="t" style="left:518.0px;width:24px;text-align:center;top:418.5px;font-size:6px;font-weight:bold;color:#d0d0d0">20f</div>
<div class="a" style="left:530px;top:425px;width:1px;height:2px;background:#666;"></div>
<div class="t" style="left:558.0px;width:24px;text-align:center;top:418.5px;font-size:6px;font-weight:bold;color:#d0d0d0">02:00f</div>
<div class="a" style="left:570px;top:425px;width:1px;height:2px;background:#666;"></div>
<div class="t" style="left:598.0px;width:24px;text-align:center;top:418.5px;font-size:6px;font-weight:bold;color:#d0d0d0">10f</div>
<div class="a" style="left:610px;top:425px;width:1px;height:2px;background:#666;"></div>
<div class="t" style="left:638.0px;width:24px;text-align:center;top:418.5px;font-size:6px;font-weight:bold;color:#d0d0d0">20f</div>
<div class="a" style="left:650px;top:425px;width:1px;height:2px;background:#666;"></div>
<div class="t" style="left:678.0px;width:24px;text-align:center;top:418.5px;font-size:6px;font-weight:bold;color:#d0d0d0">03:00f</div>
<div class="a" style="left:690px;top:425px;width:1px;height:2px;background:#666;"></div>
<div class="t" style="left:718.0px;width:24px;text-align:center;top:418.5px;font-size:6px;font-weight:bold;color:#d0d0d0">10f</div>
<div class="a" style="left:730px;top:425px;width:1px;height:2px;background:#666;"></div>
<div class="t" style="left:758.0px;width:24px;text-align:center;top:418.5px;font-size:6px;font-weight:bold;color:#d0d0d0">20f</div>
<div class="a" style="left:770px;top:425px;width:1px;height:2px;background:#666;"></div>
<div class="t" style="left:798.0px;width:24px;text-align:center;top:418.5px;font-size:6px;font-weight:bold;color:#d0d0d0">04:00f</div>
<div class="a" style="left:810px;top:425px;width:1px;height:2px;background:#666;"></div>
<div class="t" style="left:838.0px;width:24px;text-align:center;top:418.5px;font-size:6px;font-weight:bold;color:#d0d0d0">10f</div>
<div class="a" style="left:850px;top:425px;width:1px;height:2px;background:#666;"></div>
<div class="t" style="left:878.0px;width:24px;text-align:center;top:418.5px;font-size:6px;font-weight:bold;color:#d0d0d0">20f</div>
<div class="a" style="left:890px;top:425px;width:1px;height:2px;background:#666;"></div>
<div class="t" style="left:918.0px;width:24px;text-align:center;top:418.5px;font-size:6px;font-weight:bold;color:#d0d0d0">05:00f</div>
<div class="a" style="left:930px;top:425px;width:1px;height:2px;background:#666;"></div>
<div class="t" style="left:958.0px;width:24px;text-align:center;top:418.5px;font-size:6px;font-weight:bold;color:#d0d0d0">10f</div>
<div class="a" style="left:970px;top:425px;width:1px;height:2px;background:#666;"></div>
<div class="t" style="left:998.0px;width:24px;text-align:center;top:418.5px;font-size:6px;font-weight:bold;color:#d0d0d0">20f</div>
<div class="a" style="left:1010px;top:425px;width:1px;height:2px;background:#666;"></div>
<div class="t" style="left:1038.0px;width:24px;text-align:center;top:418.5px;font-size:6px;font-weight:bold;color:#d0d0d0">06:0</div>
<div class="a" style="left:1050px;top:425px;width:1px;height:2px;background:#666;"></div>
<div class="a" style="left:326px;top:428px;width:730px;height:8.5px;background:#626260;"></div>
<div class="a" style="left:326px;top:428px;width:730px;height:1px;background:#707070;"></div>
<div class="a" style="left:326px;top:427.5px;width:3px;height:9px;background:#3d8de6;"></div>
<div class="a" style="left:1053px;top:427.5px;width:3px;height:9px;background:#3d8de6;"></div>
<div class="a" style="left:347px;top:436px;width:160px;height:1.3px;background:#3caa3c;"></div>
<div class="a" style="left:326px;top:437px;width:730px;height:2.5px;background:#161616;"></div>
<div class="a" style="left:328px;top:440px;width:726px;height:9px;background:#5a69d0;"></div>
<div class="a" style="left:328px;top:440px;width:726px;height:1px;background:#9aa4ea;"></div>
<div class="a" style="left:326px;top:451.0px;width:730px;height:10px;background:#323232;"></div>
<div class="a" style="left:326px;top:460.5px;width:730px;height:0.8px;background:#282828;"></div>
<div class="a" style="left:326px;top:461.5px;width:730px;height:10px;background:#323232;"></div>
<div class="a" style="left:326px;top:471.0px;width:730px;height:0.8px;background:#282828;"></div>
<div class="a" style="left:326px;top:472.0px;width:730px;height:10px;background:#323232;"></div>
<div class="a" style="left:326px;top:481.5px;width:730px;height:0.8px;background:#282828;"></div>
<div class="a" style="left:326px;top:482.5px;width:730px;height:10px;background:#323232;"></div>
<div class="a" style="left:326px;top:492.0px;width:730px;height:0.8px;background:#282828;"></div>
<div class="a" style="left:326px;top:493.0px;width:730px;height:10px;background:#323232;"></div>
<div class="a" style="left:326px;top:502.5px;width:730px;height:0.8px;background:#282828;"></div>
<div class="a" style="left:326px;top:503.5px;width:730px;height:10px;background:#323232;"></div>
<div class="a" style="left:326px;top:513.0px;width:730px;height:0.8px;background:#282828;"></div>
<div class="a" style="left:326px;top:514.0px;width:730px;height:10px;background:#323232;"></div>
<div class="a" style="left:326px;top:523.5px;width:730px;height:0.8px;background:#282828;"></div>
<div class="a" style="left:326px;top:524.5px;width:730px;height:10px;background:#323232;"></div>
<div class="a" style="left:326px;top:534.0px;width:730px;height:0.8px;background:#282828;"></div>
<div class="a" style="left:326px;top:535.0px;width:730px;height:10px;background:#323232;"></div>
<div class="a" style="left:326px;top:544.5px;width:730px;height:0.8px;background:#282828;"></div>
<div class="a" style="left:326px;top:545.0px;width:730px;height:10.5px;background:#262a36;"></div>
<div class="a" style="left:328px;top:545.0px;width:726px;height:9.3px;background:#56609c;"></div>
<div class="a" style="left:326px;top:555.5px;width:730px;height:10.5px;background:#262a36;"></div>
<div class="a" style="left:328px;top:555.5px;width:726px;height:9.3px;background:#56609c;"></div>
<div class="a" style="left:326px;top:566.0px;width:730px;height:10.5px;background:#262a36;"></div>
<div class="a" style="left:328px;top:566.0px;width:726px;height:9.3px;background:#56609c;"></div>
<div class="a" style="left:326px;top:576.5px;width:730px;height:10.5px;background:#303030;"></div>
<div class="a" style="left:1056px;top:411px;width:8px;height:176px;background:#242424;"></div>
<svg class="a" style="left:1055px;top:426px;" width="9" height="10" viewBox="0 0 9 10"><path d="M1 1H8V6L4.5 9L1 6Z" fill="#d0d0d0"/><path d="M3 3V6" stroke="#555" stroke-width="1"/></svg>
<svg class="a" style="left:1055px;top:440px;" width="9" height="8" viewBox="0 0 9 8"><path d="M0.5 4Q4.5 0 8.5 4Q4.5 8 0.5 4Z" fill="#c0c0c0"/><circle cx="4.5" cy="4" r="1.4" fill="#232323"/></svg>
<div class="a" style="left:505.0px;top:424px;width:1.2px;height:163px;background:#3d8de6;"></div>
<svg class="a" style="left:501.5px;top:417.5px;" width="9" height="9" viewBox="0 0 9 9"><path d="M0.5 0.5H8.5V5L4.5 8.5L0.5 5Z" fill="#3d8de6"/></svg>
<div class="a" style="left:504.3px;top:452.5px;width:2.6px;height:6.5px;background:#c8d4e4;"></div>
<div class="a" style="left:505.2px;top:453.7px;width:0.8px;height:4px;background:#5a7aa8;"></div>
<div class="a" style="left:504.3px;top:463.0px;width:2.6px;height:6.5px;background:#c8d4e4;"></div>
<div class="a" style="left:505.2px;top:464.2px;width:0.8px;height:4px;background:#5a7aa8;"></div>
<div class="a" style="left:504.3px;top:473.5px;width:2.6px;height:6.5px;background:#c8d4e4;"></div>
<div class="a" style="left:505.2px;top:474.7px;width:0.8px;height:4px;background:#5a7aa8;"></div>
<div class="a" style="left:504.3px;top:484.0px;width:2.6px;height:6.5px;background:#c8d4e4;"></div>
<div class="a" style="left:505.2px;top:485.2px;width:0.8px;height:4px;background:#5a7aa8;"></div>
<div class="a" style="left:504.3px;top:494.5px;width:2.6px;height:6.5px;background:#c8d4e4;"></div>
<div class="a" style="left:505.2px;top:495.7px;width:0.8px;height:4px;background:#5a7aa8;"></div>
<div class="a" style="left:504.3px;top:505.0px;width:2.6px;height:6.5px;background:#c8d4e4;"></div>
<div class="a" style="left:505.2px;top:506.2px;width:0.8px;height:4px;background:#5a7aa8;"></div>
<div class="a" style="left:504.3px;top:515.5px;width:2.6px;height:6.5px;background:#c8d4e4;"></div>
<div class="a" style="left:505.2px;top:516.7px;width:0.8px;height:4px;background:#5a7aa8;"></div>
<div class="a" style="left:504.3px;top:526.0px;width:2.6px;height:6.5px;background:#c8d4e4;"></div>
<div class="a" style="left:505.2px;top:527.2px;width:0.8px;height:4px;background:#5a7aa8;"></div>
<div class="a" style="left:504.3px;top:536.5px;width:2.6px;height:6.5px;background:#c8d4e4;"></div>
<div class="a" style="left:505.2px;top:537.7px;width:0.8px;height:4px;background:#5a7aa8;"></div>
<div class="a" style="left:387px;top:506.3px;width:2.4px;height:2.4px;border-radius:50%;background:#cfcfcf"></div>
<div class="a" style="left:508.5px;top:506.0px;width:3px;height:3px;border-radius:50%;background:#e0e0e0"></div>
<svg class="a" style="left:326px;top:589px;" width="60" height="10" viewBox="0 0 60 10"><path d="M2 5H6" stroke="#bbb" stroke-width="1"/><circle cx="15" cy="5" r="2.5" fill="none" stroke="#ccc" stroke-width="1"/><path d="M17.5 5H40" stroke="#555" stroke-width="1"/><path d="M46 7L49 3L52 7Z" fill="#ccc"/></svg>
<svg class="a" style="left:0;top:0" width="1067" height="600" viewBox="0 0 1067 600">
<clipPath id="vc"><rect x="384" y="68" width="513" height="308"/></clipPath>
<g clip-path="url(#vc)">
<polygon points="572.2,163.2 574.2,146.0 598.1,144.7 602.0,161.6 618.2,165.0 628.6,151.1 649.9,161.8 644.9,178.4 657.2,189.5 673.2,182.6 686.3,202.6 673.6,214.4 678.8,230.2 696.0,232.2 697.3,256.1 680.4,260.0 677.0,276.2 690.9,286.6 680.2,307.9 663.6,302.9 652.5,315.2 659.4,331.2 639.4,344.3 627.6,331.6 611.8,336.8 609.8,354.0 585.9,355.3 582.0,338.4 565.8,335.0 555.4,348.9 534.1,338.2 539.1,321.6 526.8,310.5 510.8,317.4 497.7,297.4 510.4,285.6 505.2,269.8 488.0,267.8 486.7,243.9 503.6,240.0 507.0,223.8 493.1,213.4 503.8,192.1 520.4,197.1 531.5,184.8 524.6,168.8 544.6,155.7 556.4,168.4" fill="none" stroke="#fafaf7" stroke-width="5.2" stroke-linejoin="miter"/>
<circle cx="592" cy="250.3" r="47" fill="none" stroke="#fafaf7" stroke-width="4.3"/>
<polygon points="700.5,88.4 704.6,71.5 720.6,73.1 721.4,90.4 735.5,97.9 750.4,88.9 760.6,101.3 748.9,114.2 753.6,129.5 770.5,133.6 768.9,149.6 751.6,150.4 744.1,164.5 753.1,179.4 740.7,189.6 727.8,177.9 712.5,182.6 708.4,199.5 692.4,197.9 691.6,180.6 677.5,173.1 662.6,182.1 652.4,169.7 664.1,156.8 659.4,141.5 642.5,137.4 644.1,121.4 661.4,120.6 668.9,106.5 659.9,91.6 672.3,81.4 685.2,93.1" fill="none" stroke="#8a90e0" stroke-width="6" opacity="0.55" stroke-linejoin="miter"/><circle cx="706.5" cy="135.5" r="17" fill="none" stroke="#8a90e0" stroke-width="6" opacity="0.55"/><polygon points="700.5,88.4 704.6,71.5 720.6,73.1 721.4,90.4 735.5,97.9 750.4,88.9 760.6,101.3 748.9,114.2 753.6,129.5 770.5,133.6 768.9,149.6 751.6,150.4 744.1,164.5 753.1,179.4 740.7,189.6 727.8,177.9 712.5,182.6 708.4,199.5 692.4,197.9 691.6,180.6 677.5,173.1 662.6,182.1 652.4,169.7 664.1,156.8 659.4,141.5 642.5,137.4 644.1,121.4 661.4,120.6 668.9,106.5 659.9,91.6 672.3,81.4 685.2,93.1" fill="none" stroke="#f8f8fc" stroke-width="4" stroke-linejoin="miter"/>
<circle cx="706.5" cy="135.5" r="17" fill="none" stroke="#f8f8fc" stroke-width="4"/>
<polygon points="700.5,88.4 704.6,71.5 720.6,73.1 721.4,90.4 735.5,97.9 750.4,88.9 760.6,101.3 748.9,114.2 753.6,129.5 770.5,133.6 768.9,149.6 751.6,150.4 744.1,164.5 753.1,179.4 740.7,189.6 727.8,177.9 712.5,182.6 708.4,199.5 692.4,197.9 691.6,180.6 677.5,173.1 662.6,182.1 652.4,169.7 664.1,156.8 659.4,141.5 642.5,137.4 644.1,121.4 661.4,120.6 668.9,106.5 659.9,91.6 672.3,81.4 685.2,93.1" fill="none" stroke="#7f86d8" stroke-width="0.7" opacity="0.55"/>
<circle cx="706.5" cy="135.5" r="17" fill="none" stroke="#7f86d8" stroke-width="0.7" opacity="0.55"/>
<g fill="#7078d0" opacity="0.8"><rect x="699.3" y="87.2" width="2.4" height="2.4"/><rect x="703.4" y="70.3" width="2.4" height="2.4"/><rect x="719.4" y="71.9" width="2.4" height="2.4"/><rect x="720.2" y="89.2" width="2.4" height="2.4"/><rect x="734.3" y="96.7" width="2.4" height="2.4"/><rect x="749.2" y="87.7" width="2.4" height="2.4"/><rect x="759.4" y="100.1" width="2.4" height="2.4"/><rect x="747.7" y="113.0" width="2.4" height="2.4"/><rect x="752.4" y="128.3" width="2.4" height="2.4"/><rect x="769.3" y="132.4" width="2.4" height="2.4"/><rect x="767.7" y="148.4" width="2.4" height="2.4"/><rect x="750.4" y="149.2" width="2.4" height="2.4"/><rect x="742.9" y="163.3" width="2.4" height="2.4"/><rect x="751.9" y="178.2" width="2.4" height="2.4"/><rect x="739.5" y="188.4" width="2.4" height="2.4"/><rect x="726.6" y="176.7" width="2.4" height="2.4"/><rect x="711.3" y="181.4" width="2.4" height="2.4"/><rect x="707.2" y="198.3" width="2.4" height="2.4"/><rect x="691.2" y="196.7" width="2.4" height="2.4"/><rect x="690.4" y="179.4" width="2.4" height="2.4"/><rect x="676.3" y="171.9" width="2.4" height="2.4"/><rect x="661.4" y="180.9" width="2.4" height="2.4"/><rect x="651.2" y="168.5" width="2.4" height="2.4"/><rect x="662.9" y="155.6" width="2.4" height="2.4"/><rect x="658.2" y="140.3" width="2.4" height="2.4"/><rect x="641.3" y="136.2" width="2.4" height="2.4"/><rect x="642.9" y="120.2" width="2.4" height="2.4"/><rect x="660.2" y="119.4" width="2.4" height="2.4"/><rect x="667.7" y="105.3" width="2.4" height="2.4"/><rect x="658.7" y="90.4" width="2.4" height="2.4"/><rect x="671.1" y="80.2" width="2.4" height="2.4"/><rect x="684.0" y="91.9" width="2.4" height="2.4"/><rect x="705.3" y="117.3" width="2.4" height="2.4"/><rect x="722.3" y="134.3" width="2.4" height="2.4"/><rect x="705.3" y="151.3" width="2.4" height="2.4"/><rect x="688.3" y="134.3" width="2.4" height="2.4"/></g>
</g>
</svg>
</body></html>
